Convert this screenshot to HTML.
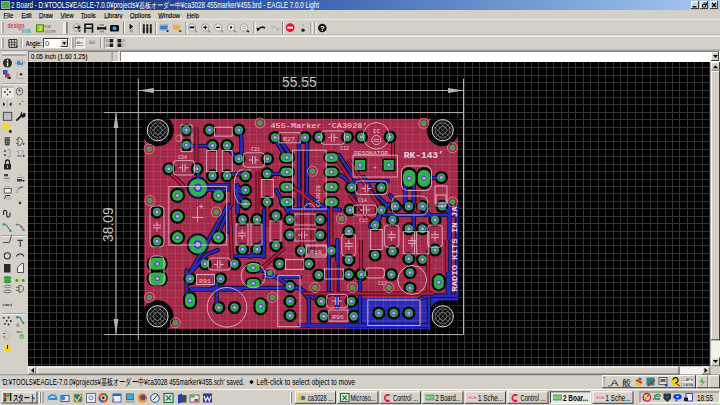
<!DOCTYPE html>
<html><head><meta charset="utf-8"><style>
html,body{margin:0;padding:0;width:720px;height:405px;overflow:hidden;background:#d4d0c8}
svg{display:block}
</style></head><body>
<svg width="720" height="405" viewBox="0 0 720 405" shape-rendering="auto">
<rect x="0" y="0" width="720" height="405" fill="#d4d0c8" />
<defs><linearGradient id="tg" x1="0" x2="1" y1="0" y2="0"><stop offset="0" stop-color="#0a246a"/><stop offset="0.42" stop-color="#3862b0"/><stop offset="1" stop-color="#a6caf0"/></linearGradient></defs>
<rect x="0" y="0" width="720" height="10" fill="url(#tg)" />
<rect x="1" y="1" width="9" height="8" fill="#9aa89a" />
<rect x="2" y="2" width="7" height="6" fill="#3fa84a" />
<text x="11" y="8.4" font-family="Liberation Sans" font-size="8.4" fill="#fff" textLength="308" lengthAdjust="spacingAndGlyphs">2 Board - D:¥TOOLS¥EAGLE-7.0.0¥projects¥基板オーダー中¥ca3028 455marker¥455.brd - EAGLE 7.0.0 Light</text>
<rect x="691" y="1" width="8" height="8" fill="#d4d0c8" />
<line x1="691" y1="1.5" x2="699" y2="1.5" stroke="#fff" stroke-width="1" />
<line x1="691.5" y1="1" x2="691.5" y2="9" stroke="#fff" stroke-width="1" />
<line x1="691" y1="8.5" x2="699" y2="8.5" stroke="#404040" stroke-width="1" />
<line x1="698.5" y1="1" x2="698.5" y2="9" stroke="#404040" stroke-width="1" />
<rect x="700" y="1" width="8" height="8" fill="#d4d0c8" />
<line x1="700" y1="1.5" x2="708" y2="1.5" stroke="#fff" stroke-width="1" />
<line x1="700.5" y1="1" x2="700.5" y2="9" stroke="#fff" stroke-width="1" />
<line x1="700" y1="8.5" x2="708" y2="8.5" stroke="#404040" stroke-width="1" />
<line x1="707.5" y1="1" x2="707.5" y2="9" stroke="#404040" stroke-width="1" />
<rect x="710" y="1" width="8" height="8" fill="#d4d0c8" />
<line x1="710" y1="1.5" x2="718" y2="1.5" stroke="#fff" stroke-width="1" />
<line x1="710.5" y1="1" x2="710.5" y2="9" stroke="#fff" stroke-width="1" />
<line x1="710" y1="8.5" x2="718" y2="8.5" stroke="#404040" stroke-width="1" />
<line x1="717.5" y1="1" x2="717.5" y2="9" stroke="#404040" stroke-width="1" />
<path d="M692.5 6.8h4" stroke="#000" stroke-width="1.3"/>
<path d="M702.5 4.5h3v2.5h-3z M703.5 3h3v2.5" stroke="#000" stroke-width="0.9" fill="none"/>
<path d="M712 3l4 4M716 3l-4 4" stroke="#000" stroke-width="1.2"/>
<rect x="0" y="10" width="720" height="9" fill="#d4d0c8" />
<text x="3.5" y="17.6" font-family="Liberation Sans" font-size="8" fill="#000" font-weight="normal" text-anchor="start" textLength="10.0" lengthAdjust="spacingAndGlyphs" stroke="#000" stroke-width="0.15">File</text>
<line x1="3.5" y1="18.3" x2="7.7" y2="18.3" stroke="#303030" stroke-width="0.7" />
<text x="21.5" y="17.6" font-family="Liberation Sans" font-size="8" fill="#000" font-weight="normal" text-anchor="start" textLength="10.2" lengthAdjust="spacingAndGlyphs" stroke="#000" stroke-width="0.15">Edit</text>
<line x1="21.5" y1="18.3" x2="25.7" y2="18.3" stroke="#303030" stroke-width="0.7" />
<text x="38.9" y="17.6" font-family="Liberation Sans" font-size="8" fill="#000" font-weight="normal" text-anchor="start" textLength="13.9" lengthAdjust="spacingAndGlyphs" stroke="#000" stroke-width="0.15">Draw</text>
<line x1="38.9" y1="18.3" x2="43.1" y2="18.3" stroke="#303030" stroke-width="0.7" />
<text x="60.4" y="17.6" font-family="Liberation Sans" font-size="8" fill="#000" font-weight="normal" text-anchor="start" textLength="13.2" lengthAdjust="spacingAndGlyphs" stroke="#000" stroke-width="0.15">View</text>
<line x1="60.4" y1="18.3" x2="64.6" y2="18.3" stroke="#303030" stroke-width="0.7" />
<text x="80.8" y="17.6" font-family="Liberation Sans" font-size="8" fill="#000" font-weight="normal" text-anchor="start" textLength="15.0" lengthAdjust="spacingAndGlyphs" stroke="#000" stroke-width="0.15">Tools</text>
<line x1="80.8" y1="18.3" x2="85.0" y2="18.3" stroke="#303030" stroke-width="0.7" />
<text x="104.2" y="17.6" font-family="Liberation Sans" font-size="8" fill="#000" font-weight="normal" text-anchor="start" textLength="18.3" lengthAdjust="spacingAndGlyphs" stroke="#000" stroke-width="0.15">Library</text>
<line x1="104.2" y1="18.3" x2="108.4" y2="18.3" stroke="#303030" stroke-width="0.7" />
<text x="130" y="17.6" font-family="Liberation Sans" font-size="8" fill="#000" font-weight="normal" text-anchor="start" textLength="20.8" lengthAdjust="spacingAndGlyphs" stroke="#000" stroke-width="0.15">Options</text>
<line x1="130" y1="18.3" x2="134.2" y2="18.3" stroke="#303030" stroke-width="0.7" />
<text x="158.3" y="17.6" font-family="Liberation Sans" font-size="8" fill="#000" font-weight="normal" text-anchor="start" textLength="21.7" lengthAdjust="spacingAndGlyphs" stroke="#000" stroke-width="0.15">Window</text>
<line x1="158.3" y1="18.3" x2="162.5" y2="18.3" stroke="#303030" stroke-width="0.7" />
<text x="186.7" y="17.6" font-family="Liberation Sans" font-size="8" fill="#000" font-weight="normal" text-anchor="start" textLength="12.3" lengthAdjust="spacingAndGlyphs" stroke="#000" stroke-width="0.15">Help</text>
<line x1="186.7" y1="18.3" x2="190.89999999999998" y2="18.3" stroke="#303030" stroke-width="0.7" />
<line x1="0" y1="19.3" x2="720" y2="19.3" stroke="#ecebe6" stroke-width="1" />
<line x1="0" y1="35.2" x2="720" y2="35.2" stroke="#808080" stroke-width="0.8" />
<line x1="0" y1="35.9" x2="720" y2="35.9" stroke="#fff" stroke-width="0.8" />
<line x1="1.5" y1="22" x2="1.5" y2="33" stroke="#fff" stroke-width="1" />
<line x1="3.0" y1="22" x2="3.0" y2="33" stroke="#808080" stroke-width="1" />
<line x1="65" y1="22" x2="65" y2="33" stroke="#fff" stroke-width="1" />
<line x1="66.5" y1="22" x2="66.5" y2="33" stroke="#808080" stroke-width="1" />
<line x1="0" y1="50.2" x2="720" y2="50.2" stroke="#808080" stroke-width="0.8" />
<line x1="1.5" y1="38" x2="1.5" y2="48" stroke="#fff" stroke-width="1" />
<line x1="3.0" y1="38" x2="3.0" y2="48" stroke="#808080" stroke-width="1" />
<text x="7.5" y="28.2" font-family="Liberation Sans" font-size="7" fill="#d83a5a" font-weight="bold" text-anchor="start" textLength="17" lengthAdjust="spacingAndGlyphs" >design</text>
<text x="21.3" y="32.6" font-family="Liberation Sans" font-size="6.8" fill="#40b0c8" font-weight="bold" text-anchor="start" textLength="9.6" lengthAdjust="spacingAndGlyphs" >link</text>
<rect x="36" y="24.3" width="8" height="8" fill="#3a8a20" />
<rect x="37" y="25.3" width="6" height="6" fill="#9ad020" />
<path d="M39.5 26l1 2.5-1 2.5M41 26v5" stroke="#e8f040" stroke-width="0.9" fill="none"/>
<text x="44.5" y="28.2" font-family="Liberation Sans" font-size="3.6" fill="#404040" font-weight="normal" text-anchor="start" textLength="6" lengthAdjust="spacingAndGlyphs" >PCB</text>
<text x="44.5" y="32.5" font-family="Liberation Sans" font-size="3.6" fill="#404040" font-weight="normal" text-anchor="start" textLength="11" lengthAdjust="spacingAndGlyphs" >QUOTE</text>
<line x1="63.8" y1="22" x2="63.8" y2="34" stroke="#fff" stroke-width="1" />
<line x1="67.3" y1="22" x2="67.3" y2="34" stroke="#808080" stroke-width="1" />
<circle cx="77" cy="27.5" r="3.8" fill="none" stroke="#b0b0b0" stroke-width="1.3"/>
<path d="M74.5 27.5h5M78 25.6l1.8 1.9-1.8 1.9" stroke="#000" stroke-width="1.2" fill="none"/>
<path d="M78 30.5h3l-1.5 1.6z" fill="#000"/>
<path d="M85 32.8V24.2h7.5v8.6 M85 28.3h7.5" stroke="#101010" stroke-width="1.6" fill="none"/>
<rect x="87.3" y="29.5" width="3" height="3.3" fill="#b8b8b8" />
<rect x="99.5" y="24" width="4.5" height="2" fill="#909090" />
<rect x="99.5" y="30.5" width="4.5" height="2" fill="#909090" />
<path d="M97.5 28.3h8.5" stroke="#101010" stroke-width="2.2"/>
<line x1="97.8" y1="26.5" x2="97.8" y2="30" stroke="#101010" stroke-width="1.2" />
<line x1="105.6" y1="26.5" x2="105.6" y2="30" stroke="#101010" stroke-width="1.2" />
<rect x="110" y="25" width="9" height="6.5" rx="1.2" fill="#101010"/>
<circle cx="114.5" cy="28.2" r="2" fill="#30a8e8"/>
<line x1="123.5" y1="22" x2="123.5" y2="34" stroke="#808080" stroke-width="1" />
<line x1="124.5" y1="22" x2="124.5" y2="34" stroke="#fff" stroke-width="1" />
<path d="M130 24.5l2.5 2.2-2.5 2.2z" fill="#181818" stroke="#181818" stroke-width="1"/>
<rect x="129.5" y="29.5" width="3.5" height="3" fill="#a0a0a0" />
<line x1="139.3" y1="22" x2="139.3" y2="34" stroke="#808080" stroke-width="1" />
<line x1="140.3" y1="22" x2="140.3" y2="34" stroke="#fff" stroke-width="1" />
<path d="M143.8 32.5V25" stroke="#181818" stroke-width="2" stroke-linecap="round"/>
<line x1="143.8" y1="26.5" x2="143.8" y2="27.5" stroke="#909090" stroke-width="1" />
<path d="M147.3 32.5V25" stroke="#181818" stroke-width="2" stroke-linecap="round"/>
<line x1="147.3" y1="26.5" x2="147.3" y2="27.5" stroke="#909090" stroke-width="1" />
<path d="M150.8 32.5V25" stroke="#181818" stroke-width="2" stroke-linecap="round"/>
<line x1="150.8" y1="26.5" x2="150.8" y2="27.5" stroke="#909090" stroke-width="1" />
<line x1="155.8" y1="22" x2="155.8" y2="34" stroke="#808080" stroke-width="1" />
<line x1="156.8" y1="22" x2="156.8" y2="34" stroke="#fff" stroke-width="1" />
<rect x="159.5" y="24.5" width="8.5" height="6" fill="#7aa8d8" />
<rect x="160.5" y="26" width="6.5" height="3" fill="#3c78c0" />
<path d="M166 30.5h3.2l-1.6 1.8z" fill="#000"/>
<rect x="172.2" y="24.5" width="8" height="6" fill="#d8c0a0" />
<rect x="173.2" y="25.8" width="6" height="3.5" fill="#e8a840" />
<path d="M178.6 30.5h3.2l-1.6 1.8z" fill="#000"/>
<line x1="186" y1="22" x2="186" y2="34" stroke="#808080" stroke-width="1" />
<line x1="187" y1="22" x2="187" y2="34" stroke="#fff" stroke-width="1" />
<path d="M194.3 29.7l2.6 2.6" stroke="#909090" stroke-width="1.6"/>
<circle cx="192" cy="27.4" r="3.6" fill="#f4f4f4" stroke="#a8a8a8" stroke-width="1.2"/>
<rect x="189.7" y="26.4" width="4.6" height="2" fill="#101010" />
<path d="M207.60000000000002 29.7l2.6 2.6" stroke="#909090" stroke-width="1.6"/>
<circle cx="205.3" cy="27.4" r="3.6" fill="#f4f4f4" stroke="#a8a8a8" stroke-width="1.2"/>
<path d="M203.3 27.4h4M205.3 25.4v4" stroke="#101010" stroke-width="1.2"/>
<path d="M220.5 29.7l2.6 2.6" stroke="#909090" stroke-width="1.6"/>
<circle cx="218.2" cy="27.4" r="3.6" fill="#f4f4f4" stroke="#a8a8a8" stroke-width="1.2"/>
<path d="M216.2 27.4h4" stroke="#101010" stroke-width="1.2"/>
<path d="M233.4 29.7l2.6 2.6" stroke="#909090" stroke-width="1.6"/>
<circle cx="231.1" cy="27.4" r="3.6" fill="#f4f4f4" stroke="#a8a8a8" stroke-width="1.2"/>
<circle cx="231.1" cy="27.4" r="1.2" fill="#101010"/>
<path d="M246.3 29.7l2.6 2.6" stroke="#909090" stroke-width="1.6"/>
<circle cx="244" cy="27.4" r="3.6" fill="#f4f4f4" stroke="#a8a8a8" stroke-width="1.2"/>
<path d="M242 26.4h4M242 28.4h4" stroke="#a0a0a0" stroke-width="1"/>
<path d="M246.5 30.8h3l-1.5 1.6z" fill="#000"/>
<line x1="254" y1="22" x2="254" y2="34" stroke="#808080" stroke-width="1" />
<line x1="255" y1="22" x2="255" y2="34" stroke="#fff" stroke-width="1" />
<path d="M258 30.5c1-3 4-4.5 7-2.5" stroke="#181818" stroke-width="1.6" fill="none"/>
<path d="M256.3 27.8l3.5 0.4-2.2 3.2z" fill="#181818"/>
<path d="M278 30.5c-1-3-4-4.5-7-2.5" stroke="#b8b8b8" stroke-width="1.6" fill="none"/>
<path d="M279.7 27.8l-3.5 0.4 2.2 3.2z" fill="#b8b8b8"/>
<line x1="282.5" y1="22" x2="282.5" y2="34" stroke="#808080" stroke-width="1" />
<line x1="283.5" y1="22" x2="283.5" y2="34" stroke="#fff" stroke-width="1" />
<circle cx="290.2" cy="27.6" r="4.4" fill="#e01838"/>
<rect x="287.4" y="26.7" width="5.6" height="1.9" fill="#fff" />
<circle cx="303" cy="25" r="1.4" fill="#b8b8b8"/><circle cx="303" cy="30.3" r="1.8" fill="#303030"/>
<line x1="311" y1="22" x2="311" y2="34" stroke="#808080" stroke-width="1" />
<line x1="312" y1="22" x2="312" y2="34" stroke="#fff" stroke-width="1" />
<line x1="315" y1="22" x2="315" y2="34" stroke="#808080" stroke-width="1" />
<line x1="316" y1="22" x2="316" y2="34" stroke="#fff" stroke-width="1" />
<circle cx="322.3" cy="28" r="4.3" fill="#181818"/>
<text x="322.3" y="31.2" font-family="Liberation Sans" font-size="7" fill="#fff" font-weight="bold" text-anchor="middle" >?</text>
<line x1="0" y1="36" x2="720" y2="36" stroke="#fff" stroke-width="0.8" />
<rect x="8.4" y="38.9" width="9" height="9" rx="1.3" fill="#303030"/>
<rect x="9.5" y="40.0" width="1.9" height="1.9" fill="#d0d0d0" />
<rect x="9.5" y="42.6" width="1.9" height="1.9" fill="#d0d0d0" />
<rect x="9.5" y="45.2" width="1.9" height="1.9" fill="#d0d0d0" />
<rect x="12.1" y="40.0" width="1.9" height="1.9" fill="#d0d0d0" />
<rect x="12.1" y="42.6" width="1.9" height="1.9" fill="#d0d0d0" />
<rect x="12.1" y="45.2" width="1.9" height="1.9" fill="#d0d0d0" />
<rect x="14.7" y="40.0" width="1.9" height="1.9" fill="#d0d0d0" />
<rect x="14.7" y="42.6" width="1.9" height="1.9" fill="#d0d0d0" />
<rect x="14.7" y="45.2" width="1.9" height="1.9" fill="#d0d0d0" />
<path d="M15.6 46.2h2.6l-1.3 1.6z" fill="#000"/>
<line x1="21.3" y1="38" x2="21.3" y2="48" stroke="#808080" stroke-width="1" />
<line x1="22.3" y1="38" x2="22.3" y2="48" stroke="#fff" stroke-width="1" />
<text x="25.8" y="46.3" font-family="Liberation Sans" font-size="7.8" fill="#000" font-weight="normal" text-anchor="start" textLength="15.8" lengthAdjust="spacingAndGlyphs" stroke="#000" stroke-width="0.12">Angle:</text>
<rect x="43" y="38" width="26" height="10" fill="#fff" />
<line x1="43" y1="38.5" x2="69" y2="38.5" stroke="#808080" stroke-width="1" />
<line x1="43.5" y1="38" x2="43.5" y2="48" stroke="#808080" stroke-width="1" />
<line x1="43" y1="47.5" x2="69" y2="47.5" stroke="#fff" stroke-width="1" />
<line x1="68.5" y1="38" x2="68.5" y2="48" stroke="#fff" stroke-width="1" />
<line x1="43.5" y1="38.5" x2="68.5" y2="38.5" stroke="#404040" stroke-width="1" />
<line x1="43.5" y1="38.5" x2="43.5" y2="47.5" stroke="#404040" stroke-width="1" />
<text x="45" y="46.4" font-family="Liberation Sans" font-size="8" fill="#404040" font-weight="normal" text-anchor="start" >0</text>
<rect x="60.5" y="39" width="7.5" height="8" fill="#d4d0c8" />
<line x1="60.5" y1="39.5" x2="68.0" y2="39.5" stroke="#fff" stroke-width="1" />
<line x1="61.0" y1="39" x2="61.0" y2="47" stroke="#fff" stroke-width="1" />
<line x1="60.5" y1="46.5" x2="68.0" y2="46.5" stroke="#404040" stroke-width="1" />
<line x1="67.5" y1="39" x2="67.5" y2="47" stroke="#404040" stroke-width="1" />
<path d="M62.2 42.3h4.2l-2.1 2.4z" fill="#000"/>
<line x1="71.5" y1="37.5" x2="71.5" y2="48.5" stroke="#fff" stroke-width="1" />
<line x1="73" y1="37.5" x2="73" y2="48.5" stroke="#808080" stroke-width="1" />
<rect x="75" y="37.3" width="10" height="11" fill="#ebe9e4" />
<line x1="75" y1="37.8" x2="85" y2="37.8" stroke="#808080" stroke-width="0.8" />
<line x1="75.4" y1="37.3" x2="75.4" y2="48.3" stroke="#808080" stroke-width="0.8" />
<line x1="75" y1="48" x2="85" y2="48" stroke="#fff" stroke-width="0.8" />
<line x1="84.6" y1="37.3" x2="84.6" y2="48.3" stroke="#fff" stroke-width="0.8" />
<text x="76.6" y="44" font-family="Liberation Sans" font-size="3.5" fill="#505050" font-weight="normal" text-anchor="start" textLength="6.5" lengthAdjust="spacingAndGlyphs" >Abc</text>
<line x1="76.5" y1="45.5" x2="83.5" y2="45.5" stroke="#909090" stroke-width="0.8" />
<text x="89" y="44.3" font-family="Liberation Sans" font-size="3.5" fill="#707070" font-weight="normal" text-anchor="start" textLength="7" lengthAdjust="spacingAndGlyphs" transform="translate(0,0)">Abc</text>
<line x1="89" y1="41" x2="96" y2="41" stroke="#a0a0a0" stroke-width="0.7" />
<line x1="100.8" y1="38" x2="100.8" y2="48" stroke="#808080" stroke-width="1" />
<line x1="101.8" y1="38" x2="101.8" y2="48" stroke="#fff" stroke-width="1" />
<rect x="104" y="37.3" width="11" height="11" fill="#ebe9e4" />
<line x1="104" y1="37.8" x2="115" y2="37.8" stroke="#808080" stroke-width="0.8" />
<line x1="104.4" y1="37.3" x2="104.4" y2="48.3" stroke="#808080" stroke-width="0.8" />
<rect x="105.5" y="39" width="3.3" height="3.5" fill="#a8a8a8" />
<rect x="109.5" y="39" width="3.8" height="3.5" fill="#202020" />
<rect x="105.5" y="43.5" width="3.3" height="3.5" fill="#a8a8a8" />
<rect x="109.5" y="43.5" width="3.8" height="3.5" fill="#202020" />
<rect x="117.5" y="39" width="3.8" height="3.5" fill="#202020" />
<rect x="122" y="39" width="3.3" height="3.5" fill="#b8b8b8" />
<rect x="117.5" y="43.5" width="3.8" height="3.5" fill="#202020" />
<rect x="122" y="43.5" width="3.3" height="3.5" fill="#b8b8b8" />
<line x1="2" y1="53" x2="26" y2="53" stroke="#fff" stroke-width="1" />
<line x1="2" y1="55" x2="26" y2="55" stroke="#808080" stroke-width="1" />
<circle cx="7.5" cy="63" r="4.5" fill="#282828"/>
<circle cx="7.5" cy="60.5" r="0.9" fill="#e8e8e8"/><path d="M7.5 62.3v4" stroke="#e8e8e8" stroke-width="1.5"/>
<ellipse cx="20" cy="63" rx="4.6" ry="3.1" fill="#f0f0f0" stroke="#c89890" stroke-width="0.8"/>
<ellipse cx="20" cy="63" rx="3.6" ry="2.2" fill="#2890d8"/>
<circle cx="21" cy="62" r="0.9" fill="#e0f0ff"/>
<rect x="3" y="70" width="4.5" height="4.5" fill="#2058c8" />
<rect x="5" y="73.5" width="4.5" height="4" fill="#d82058" />
<rect x="7" y="76" width="3.5" height="2.8" fill="#28a048" />
<rect x="8.5" y="77" width="2" height="2" fill="#000" />
<path d="M17 71v7.5h7.5" stroke="#a8a8a8" stroke-width="0.8" fill="none"/>
<circle cx="21" cy="74.3" r="1.3" fill="#303030"/>
<line x1="2" y1="83.5" x2="26" y2="83.5" stroke="#808080" stroke-width="0.8" />
<line x1="2" y1="84.3" x2="26" y2="84.3" stroke="#fff" stroke-width="0.8" />
<rect x="1" y="86.5" width="12.5" height="11" fill="#ebe9e4" />
<line x1="1" y1="87" x2="13.5" y2="87" stroke="#808080" stroke-width="0.8" />
<line x1="1.4" y1="86.5" x2="1.4" y2="97.5" stroke="#808080" stroke-width="0.8" />
<circle cx="7.5" cy="89.4" r="0.9" fill="#303030"/>
<circle cx="7.5" cy="94.6" r="0.9" fill="#303030"/>
<circle cx="4.9" cy="92" r="0.9" fill="#303030"/>
<circle cx="10.1" cy="92" r="0.9" fill="#303030"/>
<ellipse cx="19.5" cy="91.5" rx="3.3" ry="3.8" fill="#c8c8c8" stroke="#707070" stroke-width="1"/>
<circle cx="19.5" cy="90.5" r="1" fill="#404040"/>
<path d="M3 102.5a1.8 1.8 0 0 1 0 3.6z" fill="#202020"/><path d="M11.5 102.5a1.8 1.8 0 0 0 0 3.6z" fill="#202020"/>
<line x1="7.3" y1="100" x2="7.3" y2="108" stroke="#a8a8a8" stroke-width="0.8" />
<circle cx="20" cy="104" r="0.8" fill="#303030"/><circle cx="22.6" cy="101.4" r="0.7" fill="#606060"/>
<rect x="3.3" y="112.3" width="8.5" height="8" fill="#c0c0c0" stroke="#404040" stroke-width="0.9"/>
<path d="M17 120l4-4" stroke="#202020" stroke-width="1.8" stroke-linecap="round"/>
<path d="M20.5 114.5a2.6 2.6 0 1 0 3.5-1.8l-1.5 1.6-1-1 1.5-1.5a2.6 2.6 0 0 0 -2.5 2.7z" fill="#202020"/>
<circle cx="5.8" cy="126.5" r="3.4" fill="#f8d810"/><circle cx="10.3" cy="131.5" r="1.4" fill="#101010"/>
<path d="M4.5 137.5h5.5M5 138.8h4.5l-0.4 6.2h-3.7z" fill="#404040" stroke="#404040" stroke-width="0.8"/>
<line x1="6.5" y1="139.5" x2="6.5" y2="144" stroke="#a0a0a0" stroke-width="0.6" />
<line x1="8" y1="139.5" x2="8" y2="144" stroke="#a0a0a0" stroke-width="0.6" />
<path d="M18 137.5c3 0 4.5 2 4.5 4s-1.5 4-4.5 4z" fill="none" stroke="#505050" stroke-width="0.9"/>
<line x1="16" y1="139.5" x2="18" y2="139.5" stroke="#505050" stroke-width="0.8" />
<line x1="16" y1="143.5" x2="18" y2="143.5" stroke="#505050" stroke-width="0.8" />
<path d="M22.5 143.5h2.5l-1.25 1.5z" fill="#000"/>
<path d="M3.5 151.5l1.5-1.8 1.5 1.8zM3.5 154.5l1.5 1.8 1.5-1.8z" fill="#202020"/>
<path d="M7.5 149.5h2.5v7.5h-2.5" stroke="#909090" stroke-width="0.9" fill="none"/>
<path d="M16.5 151.5h2M18.5 150v5.5M20.5 150.5h2.5v5" stroke="#a8a8a8" stroke-width="1.1" fill="none"/>
<path d="M17 156h5" stroke="#505050" stroke-width="0.8"/><path d="M22.5 155.5h2.5l-1.25 1.5z" fill="#000"/>
<path d="M5.5 164v-2a2 2 0 0 1 4 0v2" stroke="#202020" stroke-width="1.3" fill="none"/>
<rect x="4" y="164" width="7" height="5.6" rx="0.8" fill="#202020"/>
<path d="M7.5 165.5v2.5" stroke="#c0c0c0" stroke-width="1"/>
<rect x="4" y="174" width="4" height="2.3" fill="#404040" />
<line x1="4" y1="178.3" x2="10" y2="178.3" stroke="#606060" stroke-width="0.8" />
<rect x="4.5" y="180" width="5.5" height="1.5" fill="#c0c0c0" />
<rect x="17.5" y="174" width="4" height="1.6" fill="#c0c0c0" />
<line x1="17" y1="177.5" x2="23.5" y2="177.5" stroke="#808080" stroke-width="0.8" />
<rect x="17" y="179" width="5" height="2.5" fill="#404040" />
<path d="M22 180h3l-1.5 1.8z" fill="#000"/>
<path d="M4 186.5h5v2" stroke="#b0b0b0" stroke-width="1" fill="none"/>
<rect x="4.2" y="188.5" width="7" height="4.5" fill="#f0f0f0" stroke="#505050" stroke-width="0.9"/>
<path d="M17 192.5a5.5 5.5 0 0 1 6-5.5" stroke="#303030" stroke-width="1" fill="none"/>
<path d="M16.5 186.5h2v6h-2z" fill="#b8b8b8"/>
<path d="M4.5 199l1.5-3.5h4" stroke="#303030" stroke-width="1" fill="none"/>
<rect x="6.5" y="196.5" width="5" height="3.5" fill="#b8b8b8" />
<path d="M17.5 201h5" stroke="#b0b0b0" stroke-width="0.8"/><path d="M20 201.5l1.5 1.5-1.5 1.5-1.5-1.5z" fill="#202020"/>
<path d="M3.5 215v-3a1.6 1.6 0 0 1 3.2 0v3.5a1.6 1.6 0 0 0 3.2 0v-3" stroke="#303030" stroke-width="1.2" fill="none"/>
<path d="M3.5 224.3l3 0.8 2.5 4 2 1.8" stroke="#3060c0" stroke-width="1" fill="none"/>
<circle cx="3.8" cy="224.3" r="1.2" fill="#30a040"/><circle cx="10.5" cy="230.7" r="1.3" fill="#30a040"/>
<path d="M16.5 224.5l3.5 0.5 2 2.3 2.5 2.7" stroke="#3060c0" stroke-width="0.9" fill="none"/>
<circle cx="21.3" cy="226.8" r="1.1" fill="#e02060"/><circle cx="16.5" cy="224.5" r="0.9" fill="#30a040"/><path d="M22 229l2.5 2" stroke="#30a040" stroke-width="1.3"/>
<line x1="2" y1="235.5" x2="26" y2="235.5" stroke="#808080" stroke-width="0.8" />
<line x1="2" y1="236.3" x2="26" y2="236.3" stroke="#fff" stroke-width="0.8" />
<path d="M3 242.5h6.5M9.5 242l2-6.5" stroke="#404040" stroke-width="0.9" fill="none"/>
<path d="M17.5 240.3h5.5M20.3 240.3v6.5" stroke="#404040" stroke-width="1.2" fill="none"/>
<circle cx="7.3" cy="255.8" r="3.1" fill="none" stroke="#303030" stroke-width="1.1"/>
<path d="M16.5 256.5a4 4 0 0 1 7.5 0" stroke="#303030" stroke-width="1.1" fill="none"/>
<rect x="4" y="264" width="6.5" height="8.5" fill="#282828" />
<path d="M17.5 272.5v-5l4-4h2v9z" fill="#f4f4f4" stroke="#404040" stroke-width="0.9"/>
<ellipse cx="7.5" cy="277.7" rx="3.8" ry="1.8" fill="#30a040"/><ellipse cx="7.5" cy="281.5" rx="3.8" ry="1.8" fill="#30a040"/>
<line x1="4" y1="279.5" x2="11" y2="279.5" stroke="#808080" stroke-width="0.8" />
<path d="M16.5 280.5h7" stroke="#d8d820" stroke-width="1.3"/><circle cx="16.8" cy="280.5" r="1.4" fill="#30a040"/><circle cx="23.3" cy="280.5" r="1.4" fill="#30a040"/>
<ellipse cx="7.5" cy="291.5" rx="3.5" ry="1.4" fill="none" stroke="#606060" stroke-width="0.9"/>
<ellipse cx="7.5" cy="286.5" rx="3.5" ry="1.2" fill="none" stroke="#707070" stroke-width="0.8"/>
<path d="M16 287.3h3M16 290.3h3M19 285.3c3 0 4.6 1.6 4.6 3.5s-1.6 3.5-4.6 3.5z" stroke="#505050" stroke-width="0.9" fill="none"/>
<path d="M3.5 305h7.5" stroke="#404040" stroke-width="0.7"/><path d="M5.5 305l1.5-1 0 2z M9 305l-1.5-1 0 2z" fill="#404040"/>
<line x1="3" y1="303.5" x2="3" y2="306.5" stroke="#404040" stroke-width="0.6" />
<line x1="11.5" y1="303.5" x2="11.5" y2="306.5" stroke="#404040" stroke-width="0.6" />
<line x1="2" y1="313.5" x2="26" y2="313.5" stroke="#808080" stroke-width="0.8" />
<line x1="2" y1="314.3" x2="26" y2="314.3" stroke="#fff" stroke-width="0.8" />
<circle cx="3.7" cy="317.8" r="0.9" fill="#202020"/>
<circle cx="8.6" cy="317.5" r="0.9" fill="#202020"/>
<circle cx="6.8" cy="320.8" r="0.9" fill="#202020"/>
<circle cx="10.8" cy="321" r="0.9" fill="#202020"/>
<circle cx="5" cy="323.8" r="0.9" fill="#202020"/>
<circle cx="8.6" cy="324.5" r="0.9" fill="#202020"/>
<circle cx="17.3" cy="317.3" r="1.3" fill="#30a040"/><path d="M17.5 317l2.5 0.5 1.5 3 2 2.5" stroke="#3060c0" stroke-width="1.1" fill="none"/><circle cx="23.3" cy="323" r="1.2" fill="#30a040"/>
<text x="16.2" y="326.5" font-family="Liberation Sans" font-size="4.5" fill="#404040" font-weight="normal" text-anchor="start" >A</text>
<path d="M4 330.5l4 2 2.5 3-2.5 3-4 2" stroke="#a8a8a8" stroke-width="0.7" fill="none"/>
<line x1="3" y1="333.5" x2="5.5" y2="333.5" stroke="#404040" stroke-width="0.7" />
<line x1="3" y1="337" x2="5.5" y2="337" stroke="#404040" stroke-width="0.7" />
<path d="M16.5 332h6" stroke="#707070" stroke-width="0.9"/><circle cx="18" cy="332" r="0.8" fill="#505050"/>
<circle cx="21.8" cy="336.5" r="2.4" fill="#60c040"/><path d="M20.7 336.6l0.9 0.9 1.7-1.7" stroke="#fff" stroke-width="0.7" fill="none"/>
<path d="M7.5 342.5l4 8.5h-8z" fill="#f8d020"/><path d="M7.5 345v4" stroke="#202020" stroke-width="1"/>
<rect x="28" y="51" width="84" height="11" fill="#d4d0c8" />
<line x1="28" y1="51.5" x2="112" y2="51.5" stroke="#808080" stroke-width="1" />
<line x1="28.5" y1="51" x2="28.5" y2="62" stroke="#808080" stroke-width="1" />
<line x1="28" y1="61.5" x2="112" y2="61.5" stroke="#fff" stroke-width="1" />
<line x1="111.5" y1="51" x2="111.5" y2="62" stroke="#fff" stroke-width="1" />
<line x1="28" y1="61.5" x2="112" y2="61.5" stroke="#d4d0c8" stroke-width="1" />
<text x="31" y="59.3" font-family="Liberation Sans" font-size="7.8" fill="#000" font-weight="normal" text-anchor="start" textLength="56.5" lengthAdjust="spacingAndGlyphs" stroke="#000" stroke-width="0.12">0.05 inch (1.60 1.25)</text>
<rect x="111.5" y="51" width="8" height="11" fill="#d4d0c8" />
<line x1="111.5" y1="51.5" x2="119.5" y2="51.5" stroke="#808080" stroke-width="1" />
<line x1="112.0" y1="51" x2="112.0" y2="62" stroke="#808080" stroke-width="1" />
<line x1="111.5" y1="61.5" x2="119.5" y2="61.5" stroke="#fff" stroke-width="1" />
<line x1="119.0" y1="51" x2="119.0" y2="62" stroke="#fff" stroke-width="1" />
<rect x="120" y="51" width="600" height="11" fill="#fff" />
<line x1="120" y1="51.5" x2="720" y2="51.5" stroke="#808080" stroke-width="1" />
<line x1="120.5" y1="51" x2="120.5" y2="62" stroke="#808080" stroke-width="1" />
<line x1="120" y1="61.5" x2="720" y2="61.5" stroke="#fff" stroke-width="1" />
<line x1="719.5" y1="51" x2="719.5" y2="62" stroke="#fff" stroke-width="1" />
<rect x="711" y="52" width="8" height="9" fill="#d4d0c8" />
<line x1="711" y1="52.5" x2="719" y2="52.5" stroke="#fff" stroke-width="1" />
<line x1="711.5" y1="52" x2="711.5" y2="61" stroke="#fff" stroke-width="1" />
<line x1="711" y1="60.5" x2="719" y2="60.5" stroke="#404040" stroke-width="1" />
<line x1="718.5" y1="52" x2="718.5" y2="61" stroke="#404040" stroke-width="1" />
<path d="M713 55h5l-2.5 3z" fill="#000"/>
<rect x="28" y="62" width="682.5" height="304.3" fill="#000" />
<clipPath id="cv"><rect x="28" y="62" width="682.5" height="304.3"/></clipPath>
<g clip-path="url(#cv)">
<path d="M34.5 62V366.3M41.5 62V366.3M49.5 62V366.3M56.5 62V366.3M63.5 62V366.3M71.5 62V366.3M78.5 62V366.3M86.5 62V366.3M93.5 62V366.3M101.5 62V366.3M108.5 62V366.3M115.5 62V366.3M123.5 62V366.3M130.5 62V366.3M138.5 62V366.3M145.5 62V366.3M153.5 62V366.3M160.5 62V366.3M167.5 62V366.3M175.5 62V366.3M182.5 62V366.3M190.5 62V366.3M197.5 62V366.3M204.5 62V366.3M212.5 62V366.3M219.5 62V366.3M227.5 62V366.3M234.5 62V366.3M242.5 62V366.3M249.5 62V366.3M256.5 62V366.3M264.5 62V366.3M271.5 62V366.3M279.5 62V366.3M286.5 62V366.3M294.5 62V366.3M301.5 62V366.3M308.5 62V366.3M316.5 62V366.3M323.5 62V366.3M331.5 62V366.3M338.5 62V366.3M345.5 62V366.3M353.5 62V366.3M360.5 62V366.3M368.5 62V366.3M375.5 62V366.3M383.5 62V366.3M390.5 62V366.3M397.5 62V366.3M405.5 62V366.3M412.5 62V366.3M420.5 62V366.3M427.5 62V366.3M435.5 62V366.3M442.5 62V366.3M449.5 62V366.3M457.5 62V366.3M464.5 62V366.3M472.5 62V366.3M479.5 62V366.3M486.5 62V366.3M494.5 62V366.3M501.5 62V366.3M509.5 62V366.3M516.5 62V366.3M524.5 62V366.3M531.5 62V366.3M538.5 62V366.3M546.5 62V366.3M553.5 62V366.3M561.5 62V366.3M568.5 62V366.3M575.5 62V366.3M583.5 62V366.3M590.5 62V366.3M598.5 62V366.3M605.5 62V366.3M613.5 62V366.3M620.5 62V366.3M627.5 62V366.3M635.5 62V366.3M642.5 62V366.3M650.5 62V366.3M657.5 62V366.3M665.5 62V366.3M672.5 62V366.3M679.5 62V366.3M687.5 62V366.3M694.5 62V366.3M702.5 62V366.3M709.5 62V366.3M28 67.5H710.5M28 75.5H710.5M28 82.5H710.5M28 90.5H710.5M28 97.5H710.5M28 104.5H710.5M28 112.5H710.5M28 119.5H710.5M28 127.5H710.5M28 134.5H710.5M28 141.5H710.5M28 149.5H710.5M28 156.5H710.5M28 164.5H710.5M28 171.5H710.5M28 179.5H710.5M28 186.5H710.5M28 193.5H710.5M28 201.5H710.5M28 208.5H710.5M28 216.5H710.5M28 223.5H710.5M28 231.5H710.5M28 238.5H710.5M28 245.5H710.5M28 253.5H710.5M28 260.5H710.5M28 268.5H710.5M28 275.5H710.5M28 282.5H710.5M28 290.5H710.5M28 297.5H710.5M28 305.5H710.5M28 312.5H710.5M28 320.5H710.5M28 327.5H710.5M28 334.5H710.5M28 342.5H710.5M28 349.5H710.5M28 357.5H710.5M28 364.5H710.5" stroke="#333333" stroke-width="1" fill="none"/>
</g>
<g clip-path="url(#cv)">
<rect x="144.3" y="118.8" width="313.1" height="210.1" fill="#a42848"/>
<circle cx="157.9" cy="130.2" r="16" fill="#000"/>
<rect x="143.3" y="117.8" width="15.599999999999994" height="13.399999999999991" fill="#000"/>
<circle cx="442.7" cy="130.2" r="16" fill="#000"/>
<rect x="441.7" y="117.8" width="16.69999999999999" height="13.399999999999991" fill="#000"/>
<circle cx="157.5" cy="316.3" r="16" fill="#000"/>
<rect x="143.3" y="315.3" width="15.199999999999989" height="14.599999999999966" fill="#000"/>
<circle cx="442.8" cy="316.3" r="16" fill="#000"/>
<rect x="441.8" y="315.3" width="16.599999999999966" height="14.599999999999966" fill="#000"/>
<circle cx="157.9" cy="130.2" r="10.6" fill="#000" stroke="#dcdcdc" stroke-width="1"/>
<clipPath id="h15791302318"><circle cx="157.9" cy="130.2" r="10.1"/></clipPath>
<path d="M129.5 130.6L157.5 158.6M129.5 129.79999999999998L157.5 101.79999999999998M131.9 128.2L159.9 156.2M131.9 132.2L159.9 104.19999999999999M134.3 125.79999999999998L162.3 153.79999999999998M134.3 134.6L162.3 106.6M136.70000000000002 123.39999999999999L164.70000000000002 151.39999999999998M136.70000000000002 137.0L164.70000000000002 108.99999999999999M139.1 120.99999999999999L167.1 149.0M139.1 139.39999999999998L167.1 111.39999999999999M141.5 118.6L169.5 146.6M141.5 141.79999999999998L169.5 113.79999999999998M143.9 116.19999999999999L171.9 144.2M143.9 144.2L171.9 116.19999999999999M146.3 113.79999999999998L174.3 141.79999999999998M146.3 146.6L174.3 118.6M148.70000000000002 111.39999999999999L176.70000000000002 139.39999999999998M148.70000000000002 149.0L176.70000000000002 120.99999999999999M151.1 108.99999999999999L179.1 137.0M151.1 151.39999999999998L179.1 123.39999999999999M153.5 106.6L181.5 134.6M153.5 153.79999999999998L181.5 125.79999999999998M155.9 104.19999999999999L183.9 132.2M155.9 156.2L183.9 128.2M158.3 101.79999999999998L186.3 129.79999999999998M158.3 158.6L186.3 130.6" stroke="#a0a0a0" stroke-width="0.5" clip-path="url(#h15791302318)"/>
<circle cx="157.9" cy="130.2" r="4" fill="none" stroke="#909090" stroke-width="0.6"/>
<circle cx="157.9" cy="130.2" r="7.3" fill="none" stroke="#8a8a8a" stroke-width="0.5"/>
<circle cx="442.7" cy="130.2" r="10.6" fill="#000" stroke="#dcdcdc" stroke-width="1"/>
<clipPath id="h44271302323"><circle cx="442.7" cy="130.2" r="10.1"/></clipPath>
<path d="M414.3 130.6L442.3 158.6M414.3 129.79999999999998L442.3 101.79999999999998M416.7 128.2L444.7 156.2M416.7 132.2L444.7 104.19999999999999M419.09999999999997 125.79999999999998L447.09999999999997 153.79999999999998M419.09999999999997 134.6L447.09999999999997 106.6M421.5 123.39999999999999L449.5 151.39999999999998M421.5 137.0L449.5 108.99999999999999M423.9 120.99999999999999L451.9 149.0M423.9 139.39999999999998L451.9 111.39999999999999M426.3 118.6L454.3 146.6M426.3 141.79999999999998L454.3 113.79999999999998M428.7 116.19999999999999L456.7 144.2M428.7 144.2L456.7 116.19999999999999M431.09999999999997 113.79999999999998L459.09999999999997 141.79999999999998M431.09999999999997 146.6L459.09999999999997 118.6M433.5 111.39999999999999L461.5 139.39999999999998M433.5 149.0L461.5 120.99999999999999M435.9 108.99999999999999L463.9 137.0M435.9 151.39999999999998L463.9 123.39999999999999M438.3 106.6L466.3 134.6M438.3 153.79999999999998L466.3 125.79999999999998M440.7 104.19999999999999L468.7 132.2M440.7 156.2L468.7 128.2M443.09999999999997 101.79999999999998L471.09999999999997 129.79999999999998M443.09999999999997 158.6L471.09999999999997 130.6" stroke="#a0a0a0" stroke-width="0.5" clip-path="url(#h44271302323)"/>
<circle cx="442.7" cy="130.2" r="4" fill="none" stroke="#909090" stroke-width="0.6"/>
<circle cx="442.7" cy="130.2" r="7.3" fill="none" stroke="#8a8a8a" stroke-width="0.5"/>
<circle cx="157.5" cy="316.3" r="10.6" fill="#000" stroke="#dcdcdc" stroke-width="1"/>
<clipPath id="h15753163328"><circle cx="157.5" cy="316.3" r="10.1"/></clipPath>
<path d="M129.1 316.7L157.1 344.7M129.1 315.90000000000003L157.1 287.90000000000003M131.5 314.3L159.5 342.3M131.5 318.3L159.5 290.3M133.9 311.90000000000003L161.9 339.90000000000003M133.9 320.7L161.9 292.7M136.3 309.5L164.3 337.5M136.3 323.1L164.3 295.1M138.7 307.1L166.7 335.1M138.7 325.5L166.7 297.5M141.1 304.7L169.1 332.7M141.1 327.90000000000003L169.1 299.90000000000003M143.5 302.3L171.5 330.3M143.5 330.3L171.5 302.3M145.9 299.90000000000003L173.9 327.90000000000003M145.9 332.7L173.9 304.7M148.3 297.5L176.3 325.5M148.3 335.1L176.3 307.1M150.7 295.1L178.7 323.1M150.7 337.5L178.7 309.5M153.1 292.7L181.1 320.7M153.1 339.90000000000003L181.1 311.90000000000003M155.5 290.3L183.5 318.3M155.5 342.3L183.5 314.3M157.9 287.90000000000003L185.9 315.90000000000003M157.9 344.7L185.9 316.7" stroke="#a0a0a0" stroke-width="0.5" clip-path="url(#h15753163328)"/>
<circle cx="157.5" cy="316.3" r="4" fill="none" stroke="#909090" stroke-width="0.6"/>
<circle cx="157.5" cy="316.3" r="7.3" fill="none" stroke="#8a8a8a" stroke-width="0.5"/>
<circle cx="442.8" cy="316.3" r="10.6" fill="#000" stroke="#dcdcdc" stroke-width="1"/>
<clipPath id="h44283163333"><circle cx="442.8" cy="316.3" r="10.1"/></clipPath>
<path d="M414.40000000000003 316.7L442.40000000000003 344.7M414.40000000000003 315.90000000000003L442.40000000000003 287.90000000000003M416.8 314.3L444.8 342.3M416.8 318.3L444.8 290.3M419.2 311.90000000000003L447.2 339.90000000000003M419.2 320.7L447.2 292.7M421.6 309.5L449.6 337.5M421.6 323.1L449.6 295.1M424.0 307.1L452.0 335.1M424.0 325.5L452.0 297.5M426.40000000000003 304.7L454.40000000000003 332.7M426.40000000000003 327.90000000000003L454.40000000000003 299.90000000000003M428.8 302.3L456.8 330.3M428.8 330.3L456.8 302.3M431.2 299.90000000000003L459.2 327.90000000000003M431.2 332.7L459.2 304.7M433.6 297.5L461.6 325.5M433.6 335.1L461.6 307.1M436.0 295.1L464.0 323.1M436.0 337.5L464.0 309.5M438.40000000000003 292.7L466.40000000000003 320.7M438.40000000000003 339.90000000000003L466.40000000000003 311.90000000000003M440.8 290.3L468.8 318.3M440.8 342.3L468.8 314.3M443.2 287.90000000000003L471.2 315.90000000000003M443.2 344.7L471.2 316.7" stroke="#a0a0a0" stroke-width="0.5" clip-path="url(#h44283163333)"/>
<circle cx="442.8" cy="316.3" r="4" fill="none" stroke="#909090" stroke-width="0.6"/>
<circle cx="442.8" cy="316.3" r="7.3" fill="none" stroke="#8a8a8a" stroke-width="0.5"/>
<path d="M348 297H457.4V313H429.5V328.9H348Z" fill="#2a2ab4"/>
<path d="M348 297H421V326H348Z" fill="none" stroke="#b01e3c" stroke-width="1.2"/>
<path d="M429.5 329.5V313A12.5 12.5 0 0 1 442 300.5H458V329.5Z" fill="#000"/>
<circle cx="442.8" cy="316.3" r="10.6" fill="#000" stroke="#dcdcdc" stroke-width="1"/>
<clipPath id="h44283163341"><circle cx="442.8" cy="316.3" r="10.1"/></clipPath>
<path d="M414.40000000000003 316.7L442.40000000000003 344.7M414.40000000000003 315.90000000000003L442.40000000000003 287.90000000000003M416.8 314.3L444.8 342.3M416.8 318.3L444.8 290.3M419.2 311.90000000000003L447.2 339.90000000000003M419.2 320.7L447.2 292.7M421.6 309.5L449.6 337.5M421.6 323.1L449.6 295.1M424.0 307.1L452.0 335.1M424.0 325.5L452.0 297.5M426.40000000000003 304.7L454.40000000000003 332.7M426.40000000000003 327.90000000000003L454.40000000000003 299.90000000000003M428.8 302.3L456.8 330.3M428.8 330.3L456.8 302.3M431.2 299.90000000000003L459.2 327.90000000000003M431.2 332.7L459.2 304.7M433.6 297.5L461.6 325.5M433.6 335.1L461.6 307.1M436.0 295.1L464.0 323.1M436.0 337.5L464.0 309.5M438.40000000000003 292.7L466.40000000000003 320.7M438.40000000000003 339.90000000000003L466.40000000000003 311.90000000000003M440.8 290.3L468.8 318.3M440.8 342.3L468.8 314.3M443.2 287.90000000000003L471.2 315.90000000000003M443.2 344.7L471.2 316.7" stroke="#a0a0a0" stroke-width="0.5" clip-path="url(#h44283163341)"/>
<circle cx="442.8" cy="316.3" r="4" fill="none" stroke="#909090" stroke-width="0.6"/>
<circle cx="442.8" cy="316.3" r="7.3" fill="none" stroke="#8a8a8a" stroke-width="0.5"/>
<circle cx="186.3" cy="130" r="6.6" fill="#000"/>
<circle cx="209.5" cy="130" r="6.6" fill="#000"/>
<circle cx="238.8" cy="130" r="6.6" fill="#000"/>
<circle cx="275" cy="137.5" r="6.6" fill="#000"/>
<circle cx="305" cy="137.5" r="6.6" fill="#000"/>
<circle cx="318.8" cy="137" r="6.6" fill="#000"/>
<circle cx="347.5" cy="137" r="6.6" fill="#000"/>
<circle cx="361.3" cy="137" r="6.6" fill="#000"/>
<circle cx="390" cy="137" r="6.6" fill="#000"/>
<circle cx="186.3" cy="145" r="6.6" fill="#000"/>
<circle cx="212.5" cy="145.5" r="6.6" fill="#000"/>
<circle cx="227" cy="145.5" r="6.6" fill="#000"/>
<circle cx="238.8" cy="158.8" r="6.6" fill="#000"/>
<circle cx="267.5" cy="158.8" r="6.6" fill="#000"/>
<circle cx="168.8" cy="168.8" r="6.6" fill="#000"/>
<circle cx="197" cy="168.8" r="6.6" fill="#000"/>
<circle cx="212.5" cy="175.8" r="6.6" fill="#000"/>
<circle cx="227" cy="175.8" r="6.6" fill="#000"/>
<circle cx="245.5" cy="175.8" r="6.6" fill="#000"/>
<circle cx="267" cy="173.8" r="6.6" fill="#000"/>
<circle cx="441.3" cy="177.5" r="6.6" fill="#000"/>
<circle cx="245.5" cy="190" r="6.6" fill="#000"/>
<circle cx="245.5" cy="203.8" r="6.6" fill="#000"/>
<circle cx="267" cy="202" r="6.6" fill="#000"/>
<circle cx="351.3" cy="187.5" r="6.6" fill="#000"/>
<circle cx="381.3" cy="187.5" r="6.6" fill="#000"/>
<circle cx="157" cy="212" r="6.6" fill="#000"/>
<circle cx="157" cy="241.3" r="6.6" fill="#000"/>
<circle cx="242.5" cy="219.5" r="6.6" fill="#000"/>
<circle cx="257" cy="219.5" r="6.6" fill="#000"/>
<circle cx="276" cy="215.8" r="6.6" fill="#000"/>
<circle cx="289.8" cy="219.5" r="6.6" fill="#000"/>
<circle cx="289.8" cy="234.8" r="6.6" fill="#000"/>
<circle cx="242.5" cy="249.3" r="6.6" fill="#000"/>
<circle cx="257" cy="249.3" r="6.6" fill="#000"/>
<circle cx="276" cy="245.5" r="6.6" fill="#000"/>
<circle cx="301.2" cy="250.8" r="6.6" fill="#000"/>
<circle cx="205" cy="263.8" r="6.6" fill="#000"/>
<circle cx="234.5" cy="263.8" r="6.6" fill="#000"/>
<circle cx="279.5" cy="263.8" r="6.6" fill="#000"/>
<circle cx="309" cy="263.8" r="6.6" fill="#000"/>
<circle cx="190" cy="278.8" r="6.6" fill="#000"/>
<circle cx="220.5" cy="278.8" r="6.6" fill="#000"/>
<circle cx="350" cy="210" r="6.6" fill="#000"/>
<circle cx="381.3" cy="210" r="6.6" fill="#000"/>
<circle cx="395" cy="206.3" r="6.6" fill="#000"/>
<circle cx="408.8" cy="206.3" r="6.6" fill="#000"/>
<circle cx="422.5" cy="206.3" r="6.6" fill="#000"/>
<circle cx="442" cy="206.3" r="6.6" fill="#000"/>
<circle cx="320.2" cy="219.5" r="6.6" fill="#000"/>
<circle cx="375" cy="225" r="6.6" fill="#000"/>
<circle cx="392.5" cy="220" r="6.6" fill="#000"/>
<circle cx="435" cy="220" r="6.6" fill="#000"/>
<circle cx="348.8" cy="231.3" r="6.6" fill="#000"/>
<circle cx="320.2" cy="235" r="6.6" fill="#000"/>
<circle cx="408.8" cy="228.8" r="6.6" fill="#000"/>
<circle cx="422.5" cy="228.8" r="6.6" fill="#000"/>
<circle cx="331.5" cy="250.8" r="6.6" fill="#000"/>
<circle cx="375" cy="255" r="6.6" fill="#000"/>
<circle cx="392.5" cy="251.3" r="6.6" fill="#000"/>
<circle cx="435" cy="250" r="6.6" fill="#000"/>
<circle cx="348.8" cy="260" r="6.6" fill="#000"/>
<circle cx="408.8" cy="258.8" r="6.6" fill="#000"/>
<circle cx="422.5" cy="259.5" r="6.6" fill="#000"/>
<circle cx="318.8" cy="275" r="6.6" fill="#000"/>
<circle cx="348.8" cy="274.5" r="6.6" fill="#000"/>
<circle cx="361.3" cy="274.5" r="6.6" fill="#000"/>
<circle cx="391.3" cy="274.5" r="6.6" fill="#000"/>
<circle cx="410" cy="272.5" r="6.6" fill="#000"/>
<circle cx="410" cy="288" r="6.6" fill="#000"/>
<circle cx="218.8" cy="307.5" r="6.6" fill="#000"/>
<circle cx="234.5" cy="307.5" r="6.6" fill="#000"/>
<circle cx="290" cy="286.3" r="6.6" fill="#000"/>
<circle cx="290" cy="301.3" r="6.6" fill="#000"/>
<circle cx="290" cy="315.5" r="6.6" fill="#000"/>
<circle cx="321.3" cy="301.3" r="6.6" fill="#000"/>
<circle cx="351.3" cy="301.3" r="6.6" fill="#000"/>
<circle cx="323.8" cy="316.3" r="6.6" fill="#000"/>
<circle cx="353.8" cy="316.3" r="6.6" fill="#000"/>
<circle cx="378.8" cy="313" r="6.6" fill="#000"/>
<circle cx="393.8" cy="313" r="6.6" fill="#000"/>
<circle cx="408.8" cy="313" r="6.6" fill="#000"/>
<rect x="245.10000000000002" y="261.8" width="16.4" height="12" rx="6" fill="#000"/>
<rect x="245.10000000000002" y="277.3" width="16.4" height="12" rx="6" fill="#000"/>
<rect x="278.8" y="151.6" width="16.4" height="12" rx="6" fill="#000"/>
<rect x="278.8" y="166" width="16.4" height="12" rx="6" fill="#000"/>
<rect x="278.8" y="181" width="16.4" height="12" rx="6" fill="#000"/>
<rect x="278.8" y="196" width="16.4" height="12" rx="6" fill="#000"/>
<rect x="323.2" y="151.6" width="16.4" height="12" rx="6" fill="#000"/>
<rect x="323.2" y="166" width="16.4" height="12" rx="6" fill="#000"/>
<rect x="323.2" y="181" width="16.4" height="12" rx="6" fill="#000"/>
<rect x="323.2" y="196" width="16.4" height="12" rx="6" fill="#000"/>
<rect x="183" y="291.5" width="14" height="18" rx="7" fill="#000"/>
<rect x="253.5" y="297.3" width="14" height="18" rx="7" fill="#000"/>
<rect x="431.8" y="273.3" width="14" height="18" rx="7" fill="#000"/>
<rect x="401.2" y="167.2" width="16" height="22" rx="8" fill="#000"/>
<rect x="416" y="167.2" width="16" height="22" rx="8" fill="#000"/>
<rect x="146.8" y="256.0" width="21" height="15.6" rx="7" fill="#000"/>
<rect x="146.8" y="270.7" width="21" height="15.6" rx="7" fill="#000"/>
<circle cx="197.9" cy="187.8" r="11" fill="#000"/>
<circle cx="197.8" cy="244.5" r="11" fill="#000"/>
<circle cx="177.5" cy="195.4" r="7.6" fill="#000"/>
<circle cx="218.5" cy="195.4" r="7.6" fill="#000"/>
<circle cx="177.5" cy="216.3" r="7.6" fill="#000"/>
<circle cx="177.5" cy="237.5" r="7.6" fill="#000"/>
<circle cx="218.3" cy="237.3" r="7.6" fill="#000"/>
<rect x="353.5" y="158.5" width="13" height="13" fill="#000"/>
<rect x="382.3" y="158.5" width="13" height="13" fill="#000"/>
<path d="M145.5 118.8V328.9M153.5 118.8V328.9M160.5 118.8V328.9M167.5 118.8V328.9M175.5 118.8V328.9M182.5 118.8V328.9M190.5 118.8V328.9M197.5 118.8V328.9M204.5 118.8V328.9M212.5 118.8V328.9M219.5 118.8V328.9M227.5 118.8V328.9M234.5 118.8V328.9M242.5 118.8V328.9M249.5 118.8V328.9M256.5 118.8V328.9M264.5 118.8V328.9M271.5 118.8V328.9M279.5 118.8V328.9M286.5 118.8V328.9M294.5 118.8V328.9M301.5 118.8V328.9M308.5 118.8V328.9M316.5 118.8V328.9M323.5 118.8V328.9M331.5 118.8V328.9M338.5 118.8V328.9M345.5 118.8V328.9M353.5 118.8V328.9M360.5 118.8V328.9M368.5 118.8V328.9M375.5 118.8V328.9M383.5 118.8V328.9M390.5 118.8V328.9M397.5 118.8V328.9M405.5 118.8V328.9M412.5 118.8V328.9M420.5 118.8V328.9M427.5 118.8V328.9M435.5 118.8V328.9M442.5 118.8V328.9M449.5 118.8V328.9M457.5 118.8V328.9M144.3 119.5H457.4M144.3 127.5H457.4M144.3 134.5H457.4M144.3 141.5H457.4M144.3 149.5H457.4M144.3 156.5H457.4M144.3 164.5H457.4M144.3 171.5H457.4M144.3 179.5H457.4M144.3 186.5H457.4M144.3 193.5H457.4M144.3 201.5H457.4M144.3 208.5H457.4M144.3 216.5H457.4M144.3 223.5H457.4M144.3 231.5H457.4M144.3 238.5H457.4M144.3 245.5H457.4M144.3 253.5H457.4M144.3 260.5H457.4M144.3 268.5H457.4M144.3 275.5H457.4M144.3 282.5H457.4M144.3 290.5H457.4M144.3 297.5H457.4M144.3 305.5H457.4M144.3 312.5H457.4M144.3 320.5H457.4M144.3 327.5H457.4" stroke="#ffffff" stroke-opacity="0.085" stroke-width="1" fill="none"/>
<path d="M240.5 131 L241.5 140 L241.5 152 L239.6 159.4" stroke="#000" stroke-width="4.2" fill="none" stroke-linejoin="round" stroke-linecap="round"/>
<path d="M274.4 137.2 L285.6 157.5" stroke="#000" stroke-width="4.2" fill="none" stroke-linejoin="round" stroke-linecap="round"/>
<path d="M281.8 142.8 L288.8 152.5" stroke="#000" stroke-width="4.2" fill="none" stroke-linejoin="round" stroke-linecap="round"/>
<path d="M299 143 L304.7 137.9" stroke="#000" stroke-width="4.2" fill="none" stroke-linejoin="round" stroke-linecap="round"/>
<path d="M186.7 146 L211.6 146" stroke="#000" stroke-width="4.2" fill="none" stroke-linejoin="round" stroke-linecap="round"/>
<path d="M198.2 167.7 L198.2 188.3" stroke="#000" stroke-width="4.2" fill="none" stroke-linejoin="round" stroke-linecap="round"/>
<path d="M198.2 186 L233 185 L244.4 190.6" stroke="#000" stroke-width="4.2" fill="none" stroke-linejoin="round" stroke-linecap="round"/>
<path d="M206 190 L233 190" stroke="#000" stroke-width="4.2" fill="none" stroke-linejoin="round" stroke-linecap="round"/>
<path d="M226.7 175 L244.4 173.9" stroke="#000" stroke-width="4.2" fill="none" stroke-linejoin="round" stroke-linecap="round"/>
<path d="M266.7 173.9 L285.6 173.9" stroke="#000" stroke-width="4.2" fill="none" stroke-linejoin="round" stroke-linecap="round"/>
<path d="M233 188 L244.4 202.8" stroke="#000" stroke-width="4.2" fill="none" stroke-linejoin="round" stroke-linecap="round"/>
<path d="M299 143 L299 206" stroke="#000" stroke-width="4.2" fill="none" stroke-linejoin="round" stroke-linecap="round"/>
<path d="M307 143 L307 206" stroke="#000" stroke-width="4.2" fill="none" stroke-linejoin="round" stroke-linecap="round"/>
<path d="M338.7 155 L350.5 172 L352.1 187" stroke="#000" stroke-width="4.2" fill="none" stroke-linejoin="round" stroke-linecap="round"/>
<path d="M347 181 L388 181" stroke="#000" stroke-width="4.2" fill="none" stroke-linejoin="round" stroke-linecap="round"/>
<path d="M431 178 L440 178" stroke="#000" stroke-width="4.2" fill="none" stroke-linejoin="round" stroke-linecap="round"/>
<path d="M231 205 L216.7 237.2" stroke="#000" stroke-width="4.2" fill="none" stroke-linejoin="round" stroke-linecap="round"/>
<path d="M228 205 L200 255 L188 276" stroke="#000" stroke-width="4.2" fill="none" stroke-linejoin="round" stroke-linecap="round"/>
<path d="M227.5 205 L227.5 232" stroke="#000" stroke-width="4.2" fill="none" stroke-linejoin="round" stroke-linecap="round"/>
<path d="M233 256 L264 256" stroke="#000" stroke-width="4.2" fill="none" stroke-linejoin="round" stroke-linecap="round"/>
<path d="M191 289.5 L242 289.5" stroke="#000" stroke-width="4.2" fill="none" stroke-linejoin="round" stroke-linecap="round"/>
<path d="M264 210 L264 257" stroke="#000" stroke-width="4.2" fill="none" stroke-linejoin="round" stroke-linecap="round"/>
<path d="M287 209.5 L340 209.5" stroke="#000" stroke-width="4.2" fill="none" stroke-linejoin="round" stroke-linecap="round"/>
<path d="M329 210 L329 295" stroke="#000" stroke-width="4.2" fill="none" stroke-linejoin="round" stroke-linecap="round"/>
<path d="M376 226 L380 216" stroke="#000" stroke-width="4.2" fill="none" stroke-linejoin="round" stroke-linecap="round"/>
<path d="M384 215 L457 215" stroke="#000" stroke-width="4.2" fill="none" stroke-linejoin="round" stroke-linecap="round"/>
<path d="M447.8 272 L447.8 294" stroke="#000" stroke-width="4.2" fill="none" stroke-linejoin="round" stroke-linecap="round"/>
<path d="M186.7 270 L186.7 294.4" stroke="#000" stroke-width="4.2" fill="none" stroke-linejoin="round" stroke-linecap="round"/>
<path d="M191 272 L206.7 254.4 L217.8 250" stroke="#000" stroke-width="4.2" fill="none" stroke-linejoin="round" stroke-linecap="round"/>
<path d="M213 287.8 L300 287.8" stroke="#000" stroke-width="4.2" fill="none" stroke-linejoin="round" stroke-linecap="round"/>
<path d="M264.4 277 L300 277" stroke="#000" stroke-width="4.2" fill="none" stroke-linejoin="round" stroke-linecap="round"/>
<path d="M216.7 283 L216.7 308" stroke="#000" stroke-width="4.2" fill="none" stroke-linejoin="round" stroke-linecap="round"/>
<path d="M420 298.9 L428.9 295.6 L457 295.6" stroke="#000" stroke-width="4.2" fill="none" stroke-linejoin="round" stroke-linecap="round"/>
<path d="M428.9 295.6 L428.9 329" stroke="#000" stroke-width="4.2" fill="none" stroke-linejoin="round" stroke-linecap="round"/>
<path d="M300 325.5 L428.9 325.5" stroke="#000" stroke-width="4.2" fill="none" stroke-linejoin="round" stroke-linecap="round"/>
<path d="M300 287.8 L308.9 298.9 L308.9 325.6" stroke="#000" stroke-width="4.2" fill="none" stroke-linejoin="round" stroke-linecap="round"/>
<path d="M360 281 L360 323" stroke="#000" stroke-width="4.2" fill="none" stroke-linejoin="round" stroke-linecap="round"/>
<path d="M253 268 L270 273 L290 286" stroke="#000" stroke-width="4.2" fill="none" stroke-linejoin="round" stroke-linecap="round"/>
<path d="M422 207 L435 220" stroke="#000" stroke-width="4.2" fill="none" stroke-linejoin="round" stroke-linecap="round"/>
<path d="M442 206 L452 215" stroke="#000" stroke-width="4.2" fill="none" stroke-linejoin="round" stroke-linecap="round"/>
<path d="M340 175 L353.7 183.6" stroke="#000" stroke-width="4.2" fill="none" stroke-linejoin="round" stroke-linecap="round"/>
<path d="M363.8 177 L378.9 203.8" stroke="#000" stroke-width="4.2" fill="none" stroke-linejoin="round" stroke-linecap="round"/>
<path d="M390 195 L400 208" stroke="#000" stroke-width="4.2" fill="none" stroke-linejoin="round" stroke-linecap="round"/>
<path d="M300 190 L323.5 207" stroke="#000" stroke-width="4.2" fill="none" stroke-linejoin="round" stroke-linecap="round"/>
<path d="M230 150 L235 157" stroke="#000" stroke-width="4.2" fill="none" stroke-linejoin="round" stroke-linecap="round"/>
<path d="M233.5 188.6 L243.6 193.6" stroke="#000" stroke-width="4.2" fill="none" stroke-linejoin="round" stroke-linecap="round"/>
<path d="M405.4 186 L405.4 203" stroke="#000" stroke-width="4.2" fill="none" stroke-linejoin="round" stroke-linecap="round"/>
<path d="M413.8 186 L413.8 203" stroke="#000" stroke-width="4.2" fill="none" stroke-linejoin="round" stroke-linecap="round"/>
<path d="M413.8 213 L413.8 229" stroke="#000" stroke-width="4.2" fill="none" stroke-linejoin="round" stroke-linecap="round"/>
<path d="M449.5 205.5 L449.5 296" stroke="#000" stroke-width="4.2" fill="none" stroke-linejoin="round" stroke-linecap="round"/>
<path d="M457 205 L457 296" stroke="#000" stroke-width="4.2" fill="none" stroke-linejoin="round" stroke-linecap="round"/>
<path d="M337.4 240 L337.4 308" stroke="#000" stroke-width="4.2" fill="none" stroke-linejoin="round" stroke-linecap="round"/>
<path d="M276 190 L288 212" stroke="#000" stroke-width="4.2" fill="none" stroke-linejoin="round" stroke-linecap="round"/>
<path d="M237.5 185 L237.5 213" stroke="#000" stroke-width="4.2" fill="none" stroke-linejoin="round" stroke-linecap="round"/>
<path d="M263.6 240 L250 256.8" stroke="#000" stroke-width="4.2" fill="none" stroke-linejoin="round" stroke-linecap="round"/>
<path d="M297 287 L314 298" stroke="#000" stroke-width="4.2" fill="none" stroke-linejoin="round" stroke-linecap="round"/>
<path d="M376.4 194.7 L387.3 205.6" stroke="#000" stroke-width="4.2" fill="none" stroke-linejoin="round" stroke-linecap="round"/>
<path d="M370 227 L388.9 204" stroke="#000" stroke-width="4.2" fill="none" stroke-linejoin="round" stroke-linecap="round"/>
<path d="M353 194.7 L356 202.4" stroke="#000" stroke-width="4.2" fill="none" stroke-linejoin="round" stroke-linecap="round"/>
<path d="M240.5 131 L241.5 140 L241.5 152 L239.6 159.4" stroke="#2a2ab4" stroke-width="2.8" fill="none" stroke-linejoin="round" stroke-linecap="round"/>
<path d="M274.4 137.2 L285.6 157.5" stroke="#2a2ab4" stroke-width="2.8" fill="none" stroke-linejoin="round" stroke-linecap="round"/>
<path d="M281.8 142.8 L288.8 152.5" stroke="#2a2ab4" stroke-width="2.8" fill="none" stroke-linejoin="round" stroke-linecap="round"/>
<path d="M299 143 L304.7 137.9" stroke="#2a2ab4" stroke-width="2.8" fill="none" stroke-linejoin="round" stroke-linecap="round"/>
<path d="M186.7 146 L211.6 146" stroke="#2a2ab4" stroke-width="2.8" fill="none" stroke-linejoin="round" stroke-linecap="round"/>
<path d="M198.2 167.7 L198.2 188.3" stroke="#2a2ab4" stroke-width="2.8" fill="none" stroke-linejoin="round" stroke-linecap="round"/>
<path d="M198.2 186 L233 185 L244.4 190.6" stroke="#2a2ab4" stroke-width="2.8" fill="none" stroke-linejoin="round" stroke-linecap="round"/>
<path d="M206 190 L233 190" stroke="#2a2ab4" stroke-width="2.8" fill="none" stroke-linejoin="round" stroke-linecap="round"/>
<path d="M226.7 175 L244.4 173.9" stroke="#2a2ab4" stroke-width="2.8" fill="none" stroke-linejoin="round" stroke-linecap="round"/>
<path d="M266.7 173.9 L285.6 173.9" stroke="#2a2ab4" stroke-width="2.8" fill="none" stroke-linejoin="round" stroke-linecap="round"/>
<path d="M233 188 L244.4 202.8" stroke="#2a2ab4" stroke-width="2.8" fill="none" stroke-linejoin="round" stroke-linecap="round"/>
<path d="M299 143 L299 206" stroke="#2a2ab4" stroke-width="2.8" fill="none" stroke-linejoin="round" stroke-linecap="round"/>
<path d="M307 143 L307 206" stroke="#2a2ab4" stroke-width="2.8" fill="none" stroke-linejoin="round" stroke-linecap="round"/>
<path d="M338.7 155 L350.5 172 L352.1 187" stroke="#2a2ab4" stroke-width="2.8" fill="none" stroke-linejoin="round" stroke-linecap="round"/>
<path d="M347 181 L388 181" stroke="#2a2ab4" stroke-width="2.8" fill="none" stroke-linejoin="round" stroke-linecap="round"/>
<path d="M431 178 L440 178" stroke="#2a2ab4" stroke-width="2.8" fill="none" stroke-linejoin="round" stroke-linecap="round"/>
<path d="M231 205 L216.7 237.2" stroke="#2a2ab4" stroke-width="2.8" fill="none" stroke-linejoin="round" stroke-linecap="round"/>
<path d="M228 205 L200 255 L188 276" stroke="#2a2ab4" stroke-width="2.8" fill="none" stroke-linejoin="round" stroke-linecap="round"/>
<path d="M227.5 205 L227.5 232" stroke="#2a2ab4" stroke-width="2.8" fill="none" stroke-linejoin="round" stroke-linecap="round"/>
<path d="M233 256 L264 256" stroke="#2a2ab4" stroke-width="2.8" fill="none" stroke-linejoin="round" stroke-linecap="round"/>
<path d="M191 289.5 L242 289.5" stroke="#2a2ab4" stroke-width="2.8" fill="none" stroke-linejoin="round" stroke-linecap="round"/>
<path d="M264 210 L264 257" stroke="#2a2ab4" stroke-width="2.8" fill="none" stroke-linejoin="round" stroke-linecap="round"/>
<path d="M287 209.5 L340 209.5" stroke="#2a2ab4" stroke-width="2.8" fill="none" stroke-linejoin="round" stroke-linecap="round"/>
<path d="M329 210 L329 295" stroke="#2a2ab4" stroke-width="2.8" fill="none" stroke-linejoin="round" stroke-linecap="round"/>
<path d="M376 226 L380 216" stroke="#2a2ab4" stroke-width="2.8" fill="none" stroke-linejoin="round" stroke-linecap="round"/>
<path d="M384 215 L457 215" stroke="#2a2ab4" stroke-width="2.8" fill="none" stroke-linejoin="round" stroke-linecap="round"/>
<path d="M447.8 272 L447.8 294" stroke="#2a2ab4" stroke-width="2.8" fill="none" stroke-linejoin="round" stroke-linecap="round"/>
<path d="M186.7 270 L186.7 294.4" stroke="#2a2ab4" stroke-width="2.8" fill="none" stroke-linejoin="round" stroke-linecap="round"/>
<path d="M191 272 L206.7 254.4 L217.8 250" stroke="#2a2ab4" stroke-width="2.8" fill="none" stroke-linejoin="round" stroke-linecap="round"/>
<path d="M213 287.8 L300 287.8" stroke="#2a2ab4" stroke-width="2.8" fill="none" stroke-linejoin="round" stroke-linecap="round"/>
<path d="M264.4 277 L300 277" stroke="#2a2ab4" stroke-width="2.8" fill="none" stroke-linejoin="round" stroke-linecap="round"/>
<path d="M216.7 283 L216.7 308" stroke="#2a2ab4" stroke-width="2.8" fill="none" stroke-linejoin="round" stroke-linecap="round"/>
<path d="M420 298.9 L428.9 295.6 L457 295.6" stroke="#2a2ab4" stroke-width="2.8" fill="none" stroke-linejoin="round" stroke-linecap="round"/>
<path d="M428.9 295.6 L428.9 329" stroke="#2a2ab4" stroke-width="2.8" fill="none" stroke-linejoin="round" stroke-linecap="round"/>
<path d="M300 325.5 L428.9 325.5" stroke="#2a2ab4" stroke-width="2.8" fill="none" stroke-linejoin="round" stroke-linecap="round"/>
<path d="M300 287.8 L308.9 298.9 L308.9 325.6" stroke="#2a2ab4" stroke-width="2.8" fill="none" stroke-linejoin="round" stroke-linecap="round"/>
<path d="M360 281 L360 323" stroke="#2a2ab4" stroke-width="2.8" fill="none" stroke-linejoin="round" stroke-linecap="round"/>
<path d="M253 268 L270 273 L290 286" stroke="#2a2ab4" stroke-width="2.8" fill="none" stroke-linejoin="round" stroke-linecap="round"/>
<path d="M422 207 L435 220" stroke="#2a2ab4" stroke-width="2.8" fill="none" stroke-linejoin="round" stroke-linecap="round"/>
<path d="M442 206 L452 215" stroke="#2a2ab4" stroke-width="2.8" fill="none" stroke-linejoin="round" stroke-linecap="round"/>
<path d="M340 175 L353.7 183.6" stroke="#2a2ab4" stroke-width="2.8" fill="none" stroke-linejoin="round" stroke-linecap="round"/>
<path d="M363.8 177 L378.9 203.8" stroke="#2a2ab4" stroke-width="2.8" fill="none" stroke-linejoin="round" stroke-linecap="round"/>
<path d="M390 195 L400 208" stroke="#2a2ab4" stroke-width="2.8" fill="none" stroke-linejoin="round" stroke-linecap="round"/>
<path d="M300 190 L323.5 207" stroke="#2a2ab4" stroke-width="2.8" fill="none" stroke-linejoin="round" stroke-linecap="round"/>
<path d="M230 150 L235 157" stroke="#2a2ab4" stroke-width="2.8" fill="none" stroke-linejoin="round" stroke-linecap="round"/>
<path d="M233.5 188.6 L243.6 193.6" stroke="#2a2ab4" stroke-width="2.8" fill="none" stroke-linejoin="round" stroke-linecap="round"/>
<path d="M405.4 186 L405.4 203" stroke="#2a2ab4" stroke-width="2.8" fill="none" stroke-linejoin="round" stroke-linecap="round"/>
<path d="M413.8 186 L413.8 203" stroke="#2a2ab4" stroke-width="2.8" fill="none" stroke-linejoin="round" stroke-linecap="round"/>
<path d="M413.8 213 L413.8 229" stroke="#2a2ab4" stroke-width="2.8" fill="none" stroke-linejoin="round" stroke-linecap="round"/>
<path d="M449.5 205.5 L449.5 296" stroke="#2a2ab4" stroke-width="2.8" fill="none" stroke-linejoin="round" stroke-linecap="round"/>
<path d="M457 205 L457 296" stroke="#2a2ab4" stroke-width="2.8" fill="none" stroke-linejoin="round" stroke-linecap="round"/>
<path d="M337.4 240 L337.4 308" stroke="#2a2ab4" stroke-width="2.8" fill="none" stroke-linejoin="round" stroke-linecap="round"/>
<path d="M276 190 L288 212" stroke="#2a2ab4" stroke-width="2.8" fill="none" stroke-linejoin="round" stroke-linecap="round"/>
<path d="M237.5 185 L237.5 213" stroke="#2a2ab4" stroke-width="2.8" fill="none" stroke-linejoin="round" stroke-linecap="round"/>
<path d="M263.6 240 L250 256.8" stroke="#2a2ab4" stroke-width="2.8" fill="none" stroke-linejoin="round" stroke-linecap="round"/>
<path d="M297 287 L314 298" stroke="#2a2ab4" stroke-width="2.8" fill="none" stroke-linejoin="round" stroke-linecap="round"/>
<path d="M376.4 194.7 L387.3 205.6" stroke="#2a2ab4" stroke-width="2.8" fill="none" stroke-linejoin="round" stroke-linecap="round"/>
<path d="M370 227 L388.9 204" stroke="#2a2ab4" stroke-width="2.8" fill="none" stroke-linejoin="round" stroke-linecap="round"/>
<path d="M353 194.7 L356 202.4" stroke="#2a2ab4" stroke-width="2.8" fill="none" stroke-linejoin="round" stroke-linecap="round"/>
<path d="M304 293.5 L433 293.5" stroke="#200810" stroke-width="3.8" fill="none"/>
<path d="M302 209 L302 257" stroke="#200810" stroke-width="3.8" fill="none"/>
<path d="M312.5 209 L312.5 257" stroke="#200810" stroke-width="3.8" fill="none"/>
<path d="M331.4 202 L331.4 245" stroke="#200810" stroke-width="3.8" fill="none"/>
<path d="M335.5 262 L335.5 295" stroke="#200810" stroke-width="3.8" fill="none"/>
<path d="M361 240 L361 270" stroke="#200810" stroke-width="3.8" fill="none"/>
<path d="M427.8 250 L427.8 294.4" stroke="#200810" stroke-width="3.8" fill="none"/>
<path d="M446.7 240 L446.7 272" stroke="#200810" stroke-width="3.8" fill="none"/>
<path d="M196.5 127 L196.5 161" stroke="#200810" stroke-width="3.8" fill="none"/>
<path d="M176 178 L186 190" stroke="#200810" stroke-width="3.8" fill="none"/>
<path d="M171 174 L184 186" stroke="#200810" stroke-width="3.8" fill="none"/>
<path d="M335.4 156.9 L352 182" stroke="#200810" stroke-width="3.8" fill="none"/>
<path d="M230 210 L232 260" stroke="#200810" stroke-width="3.8" fill="none"/>
<path d="M232 180 L232 205" stroke="#200810" stroke-width="3.8" fill="none"/>
<path d="M348.7 160 L380.5 207" stroke="#200810" stroke-width="3.8" fill="none"/>
<path d="M418.4 190 L418.4 212" stroke="#200810" stroke-width="3.8" fill="none"/>
<path d="M284.6 247.8 L261 268.7" stroke="#200810" stroke-width="3.8" fill="none"/>
<path d="M257.5 171 L257.5 213" stroke="#200810" stroke-width="3.8" fill="none"/>
<path d="M267.5 205 L267.5 227" stroke="#200810" stroke-width="3.8" fill="none"/>
<path d="M303 150 L303 208" stroke="#200810" stroke-width="3.8" fill="none"/>
<path d="M294 187.7 L319 207" stroke="#200810" stroke-width="3.8" fill="none"/>
<path d="M393 143 L393 157" stroke="#200810" stroke-width="3.8" fill="none"/>
<path d="M350 195 L370 222" stroke="#200810" stroke-width="3.8" fill="none"/>
<path d="M304 293.5 L433 293.5" stroke="#b01e3c" stroke-width="2.4" fill="none"/>
<path d="M302 209 L302 257" stroke="#b01e3c" stroke-width="2.4" fill="none"/>
<path d="M312.5 209 L312.5 257" stroke="#b01e3c" stroke-width="2.4" fill="none"/>
<path d="M331.4 202 L331.4 245" stroke="#b01e3c" stroke-width="2.4" fill="none"/>
<path d="M335.5 262 L335.5 295" stroke="#b01e3c" stroke-width="2.4" fill="none"/>
<path d="M361 240 L361 270" stroke="#b01e3c" stroke-width="2.4" fill="none"/>
<path d="M427.8 250 L427.8 294.4" stroke="#b01e3c" stroke-width="2.4" fill="none"/>
<path d="M446.7 240 L446.7 272" stroke="#b01e3c" stroke-width="2.4" fill="none"/>
<path d="M196.5 127 L196.5 161" stroke="#b01e3c" stroke-width="2.4" fill="none"/>
<path d="M176 178 L186 190" stroke="#b01e3c" stroke-width="2.4" fill="none"/>
<path d="M171 174 L184 186" stroke="#b01e3c" stroke-width="2.4" fill="none"/>
<path d="M335.4 156.9 L352 182" stroke="#b01e3c" stroke-width="2.4" fill="none"/>
<path d="M230 210 L232 260" stroke="#b01e3c" stroke-width="2.4" fill="none"/>
<path d="M232 180 L232 205" stroke="#b01e3c" stroke-width="2.4" fill="none"/>
<path d="M348.7 160 L380.5 207" stroke="#b01e3c" stroke-width="2.4" fill="none"/>
<path d="M418.4 190 L418.4 212" stroke="#b01e3c" stroke-width="2.4" fill="none"/>
<path d="M284.6 247.8 L261 268.7" stroke="#b01e3c" stroke-width="2.4" fill="none"/>
<path d="M257.5 171 L257.5 213" stroke="#b01e3c" stroke-width="2.4" fill="none"/>
<path d="M267.5 205 L267.5 227" stroke="#b01e3c" stroke-width="2.4" fill="none"/>
<path d="M303 150 L303 208" stroke="#b01e3c" stroke-width="2.4" fill="none"/>
<path d="M294 187.7 L319 207" stroke="#b01e3c" stroke-width="2.4" fill="none"/>
<path d="M393 143 L393 157" stroke="#b01e3c" stroke-width="2.4" fill="none"/>
<path d="M350 195 L370 222" stroke="#b01e3c" stroke-width="2.4" fill="none"/>
<circle cx="186.3" cy="130" r="4.2" fill="#30b048"/>
<circle cx="209.5" cy="130" r="4.2" fill="#30b048"/>
<circle cx="238.8" cy="130" r="4.2" fill="#30b048"/>
<circle cx="275" cy="137.5" r="4.2" fill="#30b048"/>
<circle cx="305" cy="137.5" r="4.2" fill="#30b048"/>
<circle cx="318.8" cy="137" r="4.2" fill="#30b048"/>
<circle cx="347.5" cy="137" r="4.2" fill="#30b048"/>
<circle cx="361.3" cy="137" r="4.2" fill="#30b048"/>
<circle cx="390" cy="137" r="4.2" fill="#30b048"/>
<circle cx="186.3" cy="145" r="4.2" fill="#30b048"/>
<circle cx="212.5" cy="145.5" r="4.2" fill="#30b048"/>
<circle cx="227" cy="145.5" r="4.2" fill="#30b048"/>
<circle cx="238.8" cy="158.8" r="4.2" fill="#30b048"/>
<circle cx="267.5" cy="158.8" r="4.2" fill="#30b048"/>
<circle cx="168.8" cy="168.8" r="4.2" fill="#30b048"/>
<circle cx="197" cy="168.8" r="4.2" fill="#30b048"/>
<circle cx="212.5" cy="175.8" r="4.2" fill="#30b048"/>
<circle cx="227" cy="175.8" r="4.2" fill="#30b048"/>
<circle cx="245.5" cy="175.8" r="4.2" fill="#30b048"/>
<circle cx="267" cy="173.8" r="4.2" fill="#30b048"/>
<circle cx="441.3" cy="177.5" r="4.2" fill="#30b048"/>
<circle cx="245.5" cy="190" r="4.2" fill="#30b048"/>
<circle cx="245.5" cy="203.8" r="4.2" fill="#30b048"/>
<circle cx="267" cy="202" r="4.2" fill="#30b048"/>
<circle cx="351.3" cy="187.5" r="4.2" fill="#30b048"/>
<circle cx="381.3" cy="187.5" r="4.2" fill="#30b048"/>
<circle cx="157" cy="212" r="4.2" fill="#30b048"/>
<circle cx="157" cy="241.3" r="4.2" fill="#30b048"/>
<circle cx="242.5" cy="219.5" r="4.2" fill="#30b048"/>
<circle cx="257" cy="219.5" r="4.2" fill="#30b048"/>
<circle cx="276" cy="215.8" r="4.2" fill="#30b048"/>
<circle cx="289.8" cy="219.5" r="4.2" fill="#30b048"/>
<circle cx="289.8" cy="234.8" r="4.2" fill="#30b048"/>
<circle cx="242.5" cy="249.3" r="4.2" fill="#30b048"/>
<circle cx="257" cy="249.3" r="4.2" fill="#30b048"/>
<circle cx="276" cy="245.5" r="4.2" fill="#30b048"/>
<circle cx="301.2" cy="250.8" r="4.2" fill="#30b048"/>
<circle cx="205" cy="263.8" r="4.2" fill="#30b048"/>
<circle cx="234.5" cy="263.8" r="4.2" fill="#30b048"/>
<circle cx="279.5" cy="263.8" r="4.2" fill="#30b048"/>
<circle cx="309" cy="263.8" r="4.2" fill="#30b048"/>
<circle cx="190" cy="278.8" r="4.2" fill="#30b048"/>
<circle cx="220.5" cy="278.8" r="4.2" fill="#30b048"/>
<circle cx="350" cy="210" r="4.2" fill="#30b048"/>
<circle cx="381.3" cy="210" r="4.2" fill="#30b048"/>
<circle cx="395" cy="206.3" r="4.2" fill="#30b048"/>
<circle cx="408.8" cy="206.3" r="4.2" fill="#30b048"/>
<circle cx="422.5" cy="206.3" r="4.2" fill="#30b048"/>
<circle cx="442" cy="206.3" r="4.2" fill="#30b048"/>
<circle cx="320.2" cy="219.5" r="4.2" fill="#30b048"/>
<circle cx="375" cy="225" r="4.2" fill="#30b048"/>
<circle cx="392.5" cy="220" r="4.2" fill="#30b048"/>
<circle cx="435" cy="220" r="4.2" fill="#30b048"/>
<circle cx="348.8" cy="231.3" r="4.2" fill="#30b048"/>
<circle cx="320.2" cy="235" r="4.2" fill="#30b048"/>
<circle cx="408.8" cy="228.8" r="4.2" fill="#30b048"/>
<circle cx="422.5" cy="228.8" r="4.2" fill="#30b048"/>
<circle cx="331.5" cy="250.8" r="4.2" fill="#30b048"/>
<circle cx="375" cy="255" r="4.2" fill="#30b048"/>
<circle cx="392.5" cy="251.3" r="4.2" fill="#30b048"/>
<circle cx="435" cy="250" r="4.2" fill="#30b048"/>
<circle cx="348.8" cy="260" r="4.2" fill="#30b048"/>
<circle cx="408.8" cy="258.8" r="4.2" fill="#30b048"/>
<circle cx="422.5" cy="259.5" r="4.2" fill="#30b048"/>
<circle cx="318.8" cy="275" r="4.2" fill="#30b048"/>
<circle cx="348.8" cy="274.5" r="4.2" fill="#30b048"/>
<circle cx="361.3" cy="274.5" r="4.2" fill="#30b048"/>
<circle cx="391.3" cy="274.5" r="4.2" fill="#30b048"/>
<circle cx="410" cy="272.5" r="4.2" fill="#30b048"/>
<circle cx="410" cy="288" r="4.2" fill="#30b048"/>
<circle cx="218.8" cy="307.5" r="4.2" fill="#30b048"/>
<circle cx="234.5" cy="307.5" r="4.2" fill="#30b048"/>
<circle cx="290" cy="286.3" r="4.2" fill="#30b048"/>
<circle cx="290" cy="301.3" r="4.2" fill="#30b048"/>
<circle cx="290" cy="315.5" r="4.2" fill="#30b048"/>
<circle cx="321.3" cy="301.3" r="4.2" fill="#30b048"/>
<circle cx="351.3" cy="301.3" r="4.2" fill="#30b048"/>
<circle cx="323.8" cy="316.3" r="4.2" fill="#30b048"/>
<circle cx="353.8" cy="316.3" r="4.2" fill="#30b048"/>
<circle cx="378.8" cy="313" r="4.2" fill="#30b048"/>
<circle cx="393.8" cy="313" r="4.2" fill="#30b048"/>
<circle cx="408.8" cy="313" r="4.2" fill="#30b048"/>
<rect x="246.8" y="263.5" width="13" height="8.6" rx="4.3" fill="#30b048"/>
<rect x="246.8" y="279.0" width="13" height="8.6" rx="4.3" fill="#30b048"/>
<rect x="280.5" y="153.29999999999998" width="13" height="8.6" rx="4.3" fill="#30b048"/>
<rect x="280.5" y="167.7" width="13" height="8.6" rx="4.3" fill="#30b048"/>
<rect x="280.5" y="182.7" width="13" height="8.6" rx="4.3" fill="#30b048"/>
<rect x="280.5" y="197.7" width="13" height="8.6" rx="4.3" fill="#30b048"/>
<rect x="324.9" y="153.29999999999998" width="13" height="8.6" rx="4.3" fill="#30b048"/>
<rect x="324.9" y="167.7" width="13" height="8.6" rx="4.3" fill="#30b048"/>
<rect x="324.9" y="182.7" width="13" height="8.6" rx="4.3" fill="#30b048"/>
<rect x="324.9" y="197.7" width="13" height="8.6" rx="4.3" fill="#30b048"/>
<rect x="185" y="293.5" width="10" height="14" rx="5" fill="#30b048"/>
<rect x="255.5" y="299.3" width="10" height="14" rx="5" fill="#30b048"/>
<rect x="433.8" y="275.3" width="10" height="14" rx="5" fill="#30b048"/>
<rect x="403.0" y="169.7" width="12.4" height="17" rx="6.2" fill="#30b048"/>
<rect x="417.8" y="169.7" width="12.4" height="17" rx="6.2" fill="#30b048"/>
<rect x="148.5" y="257.8" width="17.6" height="12" rx="5.5" fill="#30b048"/>
<rect x="148.5" y="272.5" width="17.6" height="12" rx="5.5" fill="#30b048"/>
<circle cx="197.9" cy="187.8" r="9.7" fill="#2c40c0"/><circle cx="197.9" cy="187.8" r="8.8" fill="#30b048"/><circle cx="197.9" cy="187.8" r="4.2" fill="#3040c8"/><circle cx="197.9" cy="187.8" r="2.4" fill="#c8a0e0"/>
<circle cx="197.8" cy="244.5" r="9.7" fill="#2c40c0"/><circle cx="197.8" cy="244.5" r="8.8" fill="#30b048"/><circle cx="197.8" cy="244.5" r="4.2" fill="#3040c8"/><circle cx="197.8" cy="244.5" r="2.4" fill="#c8a0e0"/>
<rect x="355" y="160" width="10" height="10" fill="#30b048"/>
<rect x="383.8" y="160" width="10" height="10" fill="#30b048"/>
<circle cx="177.5" cy="195.4" r="5.4" fill="#30b048"/>
<circle cx="218.5" cy="195.4" r="5.4" fill="#30b048"/>
<circle cx="177.5" cy="216.3" r="5.4" fill="#30b048"/>
<circle cx="177.5" cy="237.5" r="5.4" fill="#30b048"/>
<circle cx="218.3" cy="237.3" r="5.4" fill="#30b048"/>
<circle cx="260" cy="123" r="5" fill="none" stroke="#d890b0" stroke-width="0.8"/>
<circle cx="260" cy="123" r="2.7" fill="#30b048"/><circle cx="260" cy="123" r="1" fill="#d04060"/>
<circle cx="423.8" cy="123.3" r="5" fill="none" stroke="#d890b0" stroke-width="0.8"/>
<circle cx="423.8" cy="123.3" r="2.7" fill="#30b048"/><circle cx="423.8" cy="123.3" r="1" fill="#d04060"/>
<circle cx="149.1" cy="149" r="5" fill="none" stroke="#d890b0" stroke-width="0.8"/>
<circle cx="149.1" cy="149" r="2.7" fill="#30b048"/><circle cx="149.1" cy="149" r="1" fill="#d04060"/>
<circle cx="452.4" cy="147.7" r="5" fill="none" stroke="#d890b0" stroke-width="0.8"/>
<circle cx="452.4" cy="147.7" r="2.7" fill="#30b048"/><circle cx="452.4" cy="147.7" r="1" fill="#d04060"/>
<circle cx="312.5" cy="171.3" r="5" fill="none" stroke="#d890b0" stroke-width="0.8"/>
<circle cx="312.5" cy="171.3" r="2.7" fill="#30b048"/><circle cx="312.5" cy="171.3" r="1" fill="#d04060"/>
<circle cx="150" cy="200.5" r="5" fill="none" stroke="#d890b0" stroke-width="0.8"/>
<circle cx="150" cy="200.5" r="2.7" fill="#30b048"/><circle cx="150" cy="200.5" r="1" fill="#d04060"/>
<circle cx="452.5" cy="202" r="5" fill="none" stroke="#d890b0" stroke-width="0.8"/>
<circle cx="452.5" cy="202" r="2.7" fill="#30b048"/><circle cx="452.5" cy="202" r="1" fill="#d04060"/>
<circle cx="216.3" cy="212" r="5" fill="none" stroke="#d890b0" stroke-width="0.8"/>
<circle cx="216.3" cy="212" r="2.7" fill="#30b048"/><circle cx="216.3" cy="212" r="1" fill="#d04060"/>
<circle cx="341.3" cy="218.8" r="5" fill="none" stroke="#d890b0" stroke-width="0.8"/>
<circle cx="341.3" cy="218.8" r="2.7" fill="#30b048"/><circle cx="341.3" cy="218.8" r="1" fill="#d04060"/>
<circle cx="270" cy="273" r="5" fill="none" stroke="#d890b0" stroke-width="0.8"/>
<circle cx="270" cy="273" r="2.7" fill="#30b048"/><circle cx="270" cy="273" r="1" fill="#d04060"/>
<circle cx="149.4" cy="297.4" r="5" fill="none" stroke="#d890b0" stroke-width="0.8"/>
<circle cx="149.4" cy="297.4" r="2.7" fill="#30b048"/><circle cx="149.4" cy="297.4" r="1" fill="#d04060"/>
<circle cx="175.4" cy="322.7" r="5" fill="none" stroke="#d890b0" stroke-width="0.8"/>
<circle cx="175.4" cy="322.7" r="2.7" fill="#30b048"/><circle cx="175.4" cy="322.7" r="1" fill="#d04060"/>
<circle cx="272.5" cy="297.5" r="5" fill="none" stroke="#d890b0" stroke-width="0.8"/>
<circle cx="272.5" cy="297.5" r="2.7" fill="#30b048"/><circle cx="272.5" cy="297.5" r="1" fill="#d04060"/>
<circle cx="315" cy="287.5" r="5" fill="none" stroke="#d890b0" stroke-width="0.8"/>
<circle cx="315" cy="287.5" r="2.7" fill="#30b048"/><circle cx="315" cy="287.5" r="1" fill="#d04060"/>
<circle cx="352.5" cy="287.5" r="5" fill="none" stroke="#d890b0" stroke-width="0.8"/>
<circle cx="352.5" cy="287.5" r="2.7" fill="#30b048"/><circle cx="352.5" cy="287.5" r="1" fill="#d04060"/>
<circle cx="388.8" cy="287.5" r="5" fill="none" stroke="#d890b0" stroke-width="0.8"/>
<circle cx="388.8" cy="287.5" r="2.7" fill="#30b048"/><circle cx="388.8" cy="287.5" r="1" fill="#d04060"/>
<circle cx="186.3" cy="130" r="2.5" fill="#4a50c8"/><circle cx="186.3" cy="130" r="1.5" fill="#e0a0d8"/>
<circle cx="209.5" cy="130" r="2.5" fill="#4a50c8"/><circle cx="209.5" cy="130" r="1.5" fill="#e0a0d8"/>
<circle cx="238.8" cy="130" r="2.5" fill="#4a50c8"/><circle cx="238.8" cy="130" r="1.5" fill="#e0a0d8"/>
<circle cx="275" cy="137.5" r="2.5" fill="#4a50c8"/><circle cx="275" cy="137.5" r="1.5" fill="#e0a0d8"/>
<circle cx="305" cy="137.5" r="2.5" fill="#4a50c8"/><circle cx="305" cy="137.5" r="1.5" fill="#e0a0d8"/>
<circle cx="318.8" cy="137" r="2.5" fill="#4a50c8"/><circle cx="318.8" cy="137" r="1.5" fill="#e0a0d8"/>
<circle cx="347.5" cy="137" r="2.5" fill="#4a50c8"/><circle cx="347.5" cy="137" r="1.5" fill="#e0a0d8"/>
<circle cx="361.3" cy="137" r="2.5" fill="#4a50c8"/><circle cx="361.3" cy="137" r="1.5" fill="#e0a0d8"/>
<circle cx="390" cy="137" r="2.5" fill="#4a50c8"/><circle cx="390" cy="137" r="1.5" fill="#e0a0d8"/>
<circle cx="186.3" cy="145" r="2.5" fill="#4a50c8"/><circle cx="186.3" cy="145" r="1.5" fill="#e0a0d8"/>
<circle cx="212.5" cy="145.5" r="2.5" fill="#4a50c8"/><circle cx="212.5" cy="145.5" r="1.5" fill="#e0a0d8"/>
<circle cx="227" cy="145.5" r="2.5" fill="#4a50c8"/><circle cx="227" cy="145.5" r="1.5" fill="#e0a0d8"/>
<circle cx="238.8" cy="158.8" r="2.5" fill="#4a50c8"/><circle cx="238.8" cy="158.8" r="1.5" fill="#e0a0d8"/>
<circle cx="267.5" cy="158.8" r="2.5" fill="#4a50c8"/><circle cx="267.5" cy="158.8" r="1.5" fill="#e0a0d8"/>
<circle cx="168.8" cy="168.8" r="2.5" fill="#4a50c8"/><circle cx="168.8" cy="168.8" r="1.5" fill="#e0a0d8"/>
<circle cx="197" cy="168.8" r="2.5" fill="#4a50c8"/><circle cx="197" cy="168.8" r="1.5" fill="#e0a0d8"/>
<circle cx="212.5" cy="175.8" r="2.5" fill="#4a50c8"/><circle cx="212.5" cy="175.8" r="1.5" fill="#e0a0d8"/>
<circle cx="227" cy="175.8" r="2.5" fill="#4a50c8"/><circle cx="227" cy="175.8" r="1.5" fill="#e0a0d8"/>
<circle cx="245.5" cy="175.8" r="2.5" fill="#4a50c8"/><circle cx="245.5" cy="175.8" r="1.5" fill="#e0a0d8"/>
<circle cx="267" cy="173.8" r="2.5" fill="#4a50c8"/><circle cx="267" cy="173.8" r="1.5" fill="#e0a0d8"/>
<circle cx="441.3" cy="177.5" r="2.5" fill="#4a50c8"/><circle cx="441.3" cy="177.5" r="1.5" fill="#e0a0d8"/>
<circle cx="245.5" cy="190" r="2.5" fill="#4a50c8"/><circle cx="245.5" cy="190" r="1.5" fill="#e0a0d8"/>
<circle cx="245.5" cy="203.8" r="2.5" fill="#4a50c8"/><circle cx="245.5" cy="203.8" r="1.5" fill="#e0a0d8"/>
<circle cx="267" cy="202" r="2.5" fill="#4a50c8"/><circle cx="267" cy="202" r="1.5" fill="#e0a0d8"/>
<circle cx="351.3" cy="187.5" r="2.5" fill="#4a50c8"/><circle cx="351.3" cy="187.5" r="1.5" fill="#e0a0d8"/>
<circle cx="381.3" cy="187.5" r="2.5" fill="#4a50c8"/><circle cx="381.3" cy="187.5" r="1.5" fill="#e0a0d8"/>
<circle cx="157" cy="212" r="2.5" fill="#4a50c8"/><circle cx="157" cy="212" r="1.5" fill="#e0a0d8"/>
<circle cx="157" cy="241.3" r="2.5" fill="#4a50c8"/><circle cx="157" cy="241.3" r="1.5" fill="#e0a0d8"/>
<circle cx="242.5" cy="219.5" r="2.5" fill="#4a50c8"/><circle cx="242.5" cy="219.5" r="1.5" fill="#e0a0d8"/>
<circle cx="257" cy="219.5" r="2.5" fill="#4a50c8"/><circle cx="257" cy="219.5" r="1.5" fill="#e0a0d8"/>
<circle cx="276" cy="215.8" r="2.5" fill="#4a50c8"/><circle cx="276" cy="215.8" r="1.5" fill="#e0a0d8"/>
<circle cx="289.8" cy="219.5" r="2.5" fill="#4a50c8"/><circle cx="289.8" cy="219.5" r="1.5" fill="#e0a0d8"/>
<circle cx="289.8" cy="234.8" r="2.5" fill="#4a50c8"/><circle cx="289.8" cy="234.8" r="1.5" fill="#e0a0d8"/>
<circle cx="242.5" cy="249.3" r="2.5" fill="#4a50c8"/><circle cx="242.5" cy="249.3" r="1.5" fill="#e0a0d8"/>
<circle cx="257" cy="249.3" r="2.5" fill="#4a50c8"/><circle cx="257" cy="249.3" r="1.5" fill="#e0a0d8"/>
<circle cx="276" cy="245.5" r="2.5" fill="#4a50c8"/><circle cx="276" cy="245.5" r="1.5" fill="#e0a0d8"/>
<circle cx="301.2" cy="250.8" r="2.5" fill="#4a50c8"/><circle cx="301.2" cy="250.8" r="1.5" fill="#e0a0d8"/>
<circle cx="205" cy="263.8" r="2.5" fill="#4a50c8"/><circle cx="205" cy="263.8" r="1.5" fill="#e0a0d8"/>
<circle cx="234.5" cy="263.8" r="2.5" fill="#4a50c8"/><circle cx="234.5" cy="263.8" r="1.5" fill="#e0a0d8"/>
<circle cx="279.5" cy="263.8" r="2.5" fill="#4a50c8"/><circle cx="279.5" cy="263.8" r="1.5" fill="#e0a0d8"/>
<circle cx="309" cy="263.8" r="2.5" fill="#4a50c8"/><circle cx="309" cy="263.8" r="1.5" fill="#e0a0d8"/>
<circle cx="190" cy="278.8" r="2.5" fill="#4a50c8"/><circle cx="190" cy="278.8" r="1.5" fill="#e0a0d8"/>
<circle cx="220.5" cy="278.8" r="2.5" fill="#4a50c8"/><circle cx="220.5" cy="278.8" r="1.5" fill="#e0a0d8"/>
<circle cx="350" cy="210" r="2.5" fill="#4a50c8"/><circle cx="350" cy="210" r="1.5" fill="#e0a0d8"/>
<circle cx="381.3" cy="210" r="2.5" fill="#4a50c8"/><circle cx="381.3" cy="210" r="1.5" fill="#e0a0d8"/>
<circle cx="395" cy="206.3" r="2.5" fill="#4a50c8"/><circle cx="395" cy="206.3" r="1.5" fill="#e0a0d8"/>
<circle cx="408.8" cy="206.3" r="2.5" fill="#4a50c8"/><circle cx="408.8" cy="206.3" r="1.5" fill="#e0a0d8"/>
<circle cx="422.5" cy="206.3" r="2.5" fill="#4a50c8"/><circle cx="422.5" cy="206.3" r="1.5" fill="#e0a0d8"/>
<circle cx="442" cy="206.3" r="2.5" fill="#4a50c8"/><circle cx="442" cy="206.3" r="1.5" fill="#e0a0d8"/>
<circle cx="320.2" cy="219.5" r="2.5" fill="#4a50c8"/><circle cx="320.2" cy="219.5" r="1.5" fill="#e0a0d8"/>
<circle cx="375" cy="225" r="2.5" fill="#4a50c8"/><circle cx="375" cy="225" r="1.5" fill="#e0a0d8"/>
<circle cx="392.5" cy="220" r="2.5" fill="#4a50c8"/><circle cx="392.5" cy="220" r="1.5" fill="#e0a0d8"/>
<circle cx="435" cy="220" r="2.5" fill="#4a50c8"/><circle cx="435" cy="220" r="1.5" fill="#e0a0d8"/>
<circle cx="348.8" cy="231.3" r="2.5" fill="#4a50c8"/><circle cx="348.8" cy="231.3" r="1.5" fill="#e0a0d8"/>
<circle cx="320.2" cy="235" r="2.5" fill="#4a50c8"/><circle cx="320.2" cy="235" r="1.5" fill="#e0a0d8"/>
<circle cx="408.8" cy="228.8" r="2.5" fill="#4a50c8"/><circle cx="408.8" cy="228.8" r="1.5" fill="#e0a0d8"/>
<circle cx="422.5" cy="228.8" r="2.5" fill="#4a50c8"/><circle cx="422.5" cy="228.8" r="1.5" fill="#e0a0d8"/>
<circle cx="331.5" cy="250.8" r="2.5" fill="#4a50c8"/><circle cx="331.5" cy="250.8" r="1.5" fill="#e0a0d8"/>
<circle cx="375" cy="255" r="2.5" fill="#4a50c8"/><circle cx="375" cy="255" r="1.5" fill="#e0a0d8"/>
<circle cx="392.5" cy="251.3" r="2.5" fill="#4a50c8"/><circle cx="392.5" cy="251.3" r="1.5" fill="#e0a0d8"/>
<circle cx="435" cy="250" r="2.5" fill="#4a50c8"/><circle cx="435" cy="250" r="1.5" fill="#e0a0d8"/>
<circle cx="348.8" cy="260" r="2.5" fill="#4a50c8"/><circle cx="348.8" cy="260" r="1.5" fill="#e0a0d8"/>
<circle cx="408.8" cy="258.8" r="2.5" fill="#4a50c8"/><circle cx="408.8" cy="258.8" r="1.5" fill="#e0a0d8"/>
<circle cx="422.5" cy="259.5" r="2.5" fill="#4a50c8"/><circle cx="422.5" cy="259.5" r="1.5" fill="#e0a0d8"/>
<circle cx="318.8" cy="275" r="2.5" fill="#4a50c8"/><circle cx="318.8" cy="275" r="1.5" fill="#e0a0d8"/>
<circle cx="348.8" cy="274.5" r="2.5" fill="#4a50c8"/><circle cx="348.8" cy="274.5" r="1.5" fill="#e0a0d8"/>
<circle cx="361.3" cy="274.5" r="2.5" fill="#4a50c8"/><circle cx="361.3" cy="274.5" r="1.5" fill="#e0a0d8"/>
<circle cx="391.3" cy="274.5" r="2.5" fill="#4a50c8"/><circle cx="391.3" cy="274.5" r="1.5" fill="#e0a0d8"/>
<circle cx="410" cy="272.5" r="2.5" fill="#4a50c8"/><circle cx="410" cy="272.5" r="1.5" fill="#e0a0d8"/>
<circle cx="410" cy="288" r="2.5" fill="#4a50c8"/><circle cx="410" cy="288" r="1.5" fill="#e0a0d8"/>
<circle cx="218.8" cy="307.5" r="2.5" fill="#4a50c8"/><circle cx="218.8" cy="307.5" r="1.5" fill="#e0a0d8"/>
<circle cx="234.5" cy="307.5" r="2.5" fill="#4a50c8"/><circle cx="234.5" cy="307.5" r="1.5" fill="#e0a0d8"/>
<circle cx="290" cy="286.3" r="2.5" fill="#4a50c8"/><circle cx="290" cy="286.3" r="1.5" fill="#e0a0d8"/>
<circle cx="290" cy="301.3" r="2.5" fill="#4a50c8"/><circle cx="290" cy="301.3" r="1.5" fill="#e0a0d8"/>
<circle cx="290" cy="315.5" r="2.5" fill="#4a50c8"/><circle cx="290" cy="315.5" r="1.5" fill="#e0a0d8"/>
<circle cx="321.3" cy="301.3" r="2.5" fill="#4a50c8"/><circle cx="321.3" cy="301.3" r="1.5" fill="#e0a0d8"/>
<circle cx="351.3" cy="301.3" r="2.5" fill="#4a50c8"/><circle cx="351.3" cy="301.3" r="1.5" fill="#e0a0d8"/>
<circle cx="323.8" cy="316.3" r="2.5" fill="#4a50c8"/><circle cx="323.8" cy="316.3" r="1.5" fill="#e0a0d8"/>
<circle cx="353.8" cy="316.3" r="2.5" fill="#4a50c8"/><circle cx="353.8" cy="316.3" r="1.5" fill="#e0a0d8"/>
<circle cx="378.8" cy="313" r="2.5" fill="#4a50c8"/><circle cx="378.8" cy="313" r="1.5" fill="#e0a0d8"/>
<circle cx="393.8" cy="313" r="2.5" fill="#4a50c8"/><circle cx="393.8" cy="313" r="1.5" fill="#e0a0d8"/>
<circle cx="408.8" cy="313" r="2.5" fill="#4a50c8"/><circle cx="408.8" cy="313" r="1.5" fill="#e0a0d8"/>
<circle cx="253.3" cy="267.8" r="2.5" fill="#4a50c8"/><circle cx="253.3" cy="267.8" r="1.5" fill="#e0a0d8"/>
<circle cx="253.3" cy="283.3" r="2.5" fill="#4a50c8"/><circle cx="253.3" cy="283.3" r="1.5" fill="#e0a0d8"/>
<circle cx="287" cy="157.6" r="2.5" fill="#4a50c8"/><circle cx="287" cy="157.6" r="1.5" fill="#e0a0d8"/>
<circle cx="287" cy="172" r="2.5" fill="#4a50c8"/><circle cx="287" cy="172" r="1.5" fill="#e0a0d8"/>
<circle cx="287" cy="187" r="2.5" fill="#4a50c8"/><circle cx="287" cy="187" r="1.5" fill="#e0a0d8"/>
<circle cx="287" cy="202" r="2.5" fill="#4a50c8"/><circle cx="287" cy="202" r="1.5" fill="#e0a0d8"/>
<circle cx="331.4" cy="157.6" r="2.5" fill="#4a50c8"/><circle cx="331.4" cy="157.6" r="1.5" fill="#e0a0d8"/>
<circle cx="331.4" cy="172" r="2.5" fill="#4a50c8"/><circle cx="331.4" cy="172" r="1.5" fill="#e0a0d8"/>
<circle cx="331.4" cy="187" r="2.5" fill="#4a50c8"/><circle cx="331.4" cy="187" r="1.5" fill="#e0a0d8"/>
<circle cx="331.4" cy="202" r="2.5" fill="#4a50c8"/><circle cx="331.4" cy="202" r="1.5" fill="#e0a0d8"/>
<circle cx="190" cy="300.5" r="2.5" fill="#4a50c8"/><circle cx="190" cy="300.5" r="1.5" fill="#e0a0d8"/>
<circle cx="260.5" cy="306.3" r="2.5" fill="#4a50c8"/><circle cx="260.5" cy="306.3" r="1.5" fill="#e0a0d8"/>
<circle cx="438.8" cy="282.3" r="2.5" fill="#4a50c8"/><circle cx="438.8" cy="282.3" r="1.5" fill="#e0a0d8"/>
<circle cx="409.2" cy="178.2" r="2.5" fill="#4a50c8"/><circle cx="409.2" cy="178.2" r="1.5" fill="#e0a0d8"/>
<circle cx="424" cy="178.2" r="2.5" fill="#4a50c8"/><circle cx="424" cy="178.2" r="1.5" fill="#e0a0d8"/>
<circle cx="157.3" cy="263.8" r="2.5" fill="#4a50c8"/><circle cx="157.3" cy="263.8" r="1.5" fill="#e0a0d8"/>
<circle cx="157.3" cy="278.5" r="2.5" fill="#4a50c8"/><circle cx="157.3" cy="278.5" r="1.5" fill="#e0a0d8"/>
<circle cx="360" cy="165" r="2.5" fill="#4a50c8"/><circle cx="360" cy="165" r="1.5" fill="#e0a0d8"/>
<circle cx="388.8" cy="165" r="2.5" fill="#4a50c8"/><circle cx="388.8" cy="165" r="1.5" fill="#e0a0d8"/>
<circle cx="177.5" cy="195.4" r="2.5" fill="#4a50c8"/><circle cx="177.5" cy="195.4" r="1.5" fill="#e0a0d8"/>
<circle cx="218.5" cy="195.4" r="2.5" fill="#4a50c8"/><circle cx="218.5" cy="195.4" r="1.5" fill="#e0a0d8"/>
<circle cx="177.5" cy="216.3" r="2.5" fill="#4a50c8"/><circle cx="177.5" cy="216.3" r="1.5" fill="#e0a0d8"/>
<circle cx="177.5" cy="237.5" r="2.5" fill="#4a50c8"/><circle cx="177.5" cy="237.5" r="1.5" fill="#e0a0d8"/>
<circle cx="218.3" cy="237.3" r="2.5" fill="#4a50c8"/><circle cx="218.3" cy="237.3" r="1.5" fill="#e0a0d8"/>
<rect x="285.4" y="259.3" width="18.400000000000034" height="10.099999999999966" rx="0" fill="none" stroke="#e8c4d8" stroke-width="0.8"/>
<rect x="392" y="196" width="35.80000000000001" height="19" rx="6" fill="none" stroke="#e8c4d8" stroke-width="0.8"/>
<rect x="181" y="125" width="11" height="26.69999999999999" rx="0" fill="none" stroke="#e8c4d8" stroke-width="0.8"/>
<rect x="214.4" y="127.2" width="17.799999999999983" height="8.899999999999991" rx="0" fill="none" stroke="#e8c4d8" stroke-width="0.8"/>
<rect x="278.9" y="132.8" width="21.100000000000023" height="10.0" rx="0" fill="none" stroke="#e8c4d8" stroke-width="0.8"/>
<rect x="206.7" y="150.6" width="10.0" height="21.099999999999994" rx="0" fill="none" stroke="#e8c4d8" stroke-width="0.8"/>
<rect x="222.2" y="150.6" width="10.0" height="21.099999999999994" rx="0" fill="none" stroke="#e8c4d8" stroke-width="0.8"/>
<rect x="173.3" y="160.6" width="21.099999999999994" height="14.400000000000006" rx="3" fill="none" stroke="#e8c4d8" stroke-width="0.8"/>
<rect x="243.3" y="152.8" width="21.099999999999966" height="14.399999999999977" rx="3" fill="none" stroke="#e8c4d8" stroke-width="0.8"/>
<rect x="292.6" y="150.2" width="33.5" height="58.80000000000001" rx="0" fill="none" stroke="#e8c4d8" stroke-width="0.8"/>
<rect x="261.8" y="179.4" width="11.5" height="17.799999999999983" rx="0" fill="none" stroke="#e8c4d8" stroke-width="0.8"/>
<rect x="168.9" y="186.5" width="57.79999999999998" height="58.5" rx="0" fill="none" stroke="#e8c4d8" stroke-width="0.8"/>
<rect x="321.1" y="130.9" width="23.5" height="13.400000000000006" rx="3" fill="none" stroke="#e8c4d8" stroke-width="0.8"/>
<rect x="353" y="155.2" width="44.39999999999998" height="21.80000000000001" rx="0" fill="none" stroke="#e8c4d8" stroke-width="0.8"/>
<rect x="236" y="224" width="12" height="21" rx="0" fill="none" stroke="#e8c4d8" stroke-width="0.8"/>
<rect x="251" y="224" width="11" height="21" rx="0" fill="none" stroke="#e8c4d8" stroke-width="0.8"/>
<rect x="270" y="221" width="11" height="20" rx="0" fill="none" stroke="#e8c4d8" stroke-width="0.8"/>
<rect x="295" y="214" width="20" height="11" rx="0" fill="none" stroke="#e8c4d8" stroke-width="0.8"/>
<rect x="295" y="229" width="20" height="12" rx="0" fill="none" stroke="#e8c4d8" stroke-width="0.8"/>
<rect x="306" y="245" width="20" height="12" rx="0" fill="none" stroke="#e8c4d8" stroke-width="0.8"/>
<rect x="353" y="205" width="23.69999999999999" height="10" rx="3" fill="none" stroke="#e8c4d8" stroke-width="0.8"/>
<rect x="341.8" y="233.9" width="13.800000000000011" height="22.200000000000017" rx="3" fill="none" stroke="#e8c4d8" stroke-width="0.8"/>
<rect x="370.7" y="229.4" width="11.5" height="20.0" rx="0" fill="none" stroke="#e8c4d8" stroke-width="0.8"/>
<rect x="384.4" y="225" width="14.5" height="22.19999999999999" rx="3" fill="none" stroke="#e8c4d8" stroke-width="0.8"/>
<rect x="403.3" y="231.7" width="11.099999999999966" height="22.200000000000017" rx="0" fill="none" stroke="#e8c4d8" stroke-width="0.8"/>
<rect x="416.7" y="231.7" width="12.199999999999989" height="22.200000000000017" rx="0" fill="none" stroke="#e8c4d8" stroke-width="0.8"/>
<rect x="427.8" y="225" width="14.399999999999977" height="22.19999999999999" rx="3" fill="none" stroke="#e8c4d8" stroke-width="0.8"/>
<rect x="306.7" y="246" width="20.0" height="9" rx="0" fill="none" stroke="#e8c4d8" stroke-width="0.8"/>
<rect x="324.4" y="269" width="18.900000000000034" height="10" rx="0" fill="none" stroke="#e8c4d8" stroke-width="0.8"/>
<rect x="365.6" y="268" width="18.799999999999955" height="10" rx="3" fill="none" stroke="#e8c4d8" stroke-width="0.8"/>
<rect x="367.8" y="300" width="52.19999999999999" height="25.600000000000023" rx="0" fill="none" stroke="#e8c4d8" stroke-width="0.8"/>
<rect x="326.7" y="294.4" width="21.100000000000023" height="13.400000000000034" rx="3" fill="none" stroke="#e8c4d8" stroke-width="0.8"/>
<rect x="328.9" y="310" width="18.900000000000034" height="11.100000000000023" rx="0" fill="none" stroke="#e8c4d8" stroke-width="0.8"/>
<rect x="277.8" y="275.6" width="22.19999999999999" height="51.099999999999966" rx="0" fill="none" stroke="#e8c4d8" stroke-width="0.8"/>
<rect x="196.7" y="274.4" width="17.700000000000017" height="10.0" rx="0" fill="none" stroke="#e8c4d8" stroke-width="0.8"/>
<rect x="150" y="256" width="14" height="29" rx="4" fill="none" stroke="#e8c4d8" stroke-width="0.8"/>
<rect x="436" y="195" width="10" height="11" rx="0" fill="none" stroke="#e8c4d8" stroke-width="0.8"/>
<rect x="401.5" y="166" width="30.0" height="24.5" rx="6" fill="none" stroke="#e8c4d8" stroke-width="0.8"/>
<rect x="435" y="186" width="12" height="17" rx="0" fill="none" stroke="#e8c4d8" stroke-width="0.8"/>
<rect x="150" y="206" width="14" height="41" rx="4" fill="none" stroke="#e8c4d8" stroke-width="0.8"/>
<rect x="208" y="258" width="23" height="12" rx="4" fill="none" stroke="#e8c4d8" stroke-width="0.8"/>
<rect x="355.4" y="181" width="31.80000000000001" height="13.5" rx="4" fill="none" stroke="#e8c4d8" stroke-width="0.8"/>
<path d="M197.5 207v15M192 217.5h11M201 204.5v4M199 206.5h4" stroke="#e8c4d8" stroke-width="0.8" fill="none"/>
<path d="M304.5 208.5a5 5 0 0 1 10 0" fill="none" stroke="#e8c4d8" stroke-width="0.8"/>
<path d="M251 170H241A7 17 0 0 0 241 204H251" fill="none" stroke="#e8c4d8" stroke-width="0.8"/>
<text x="358" y="202" font-family="Liberation Mono" font-size="4.5" fill="#e8c4d8" text-anchor="start" font-weight="normal" textLength="9" lengthAdjust="spacingAndGlyphs">C14</text>
<path d="M335.7 297v8M338.3 297v8M332 301h3.7M338.3 301h3.7" stroke="#e8c4d8" stroke-width="0.9" fill="none"/>
<path d="M365.2 184.4v8M367.8 184.4v8M361.5 188.4h3.7M367.8 188.4h3.7" stroke="#e8c4d8" stroke-width="0.9" fill="none"/>
<path d="M182.5 163.8v8M185.10000000000002 163.8v8M178.8 167.8h3.7M185.10000000000002 167.8h3.7" stroke="#e8c4d8" stroke-width="0.9" fill="none"/>
<path d="M252.5 156v8M255.10000000000002 156v8M248.8 160h3.7M255.10000000000002 160h3.7" stroke="#e8c4d8" stroke-width="0.9" fill="none"/>
<path d="M331.5 133.6v8M334.1 133.6v8M327.8 137.6h3.7M334.1 137.6h3.7" stroke="#e8c4d8" stroke-width="0.9" fill="none"/>
<path d="M217.5 260.4v8M220.10000000000002 260.4v8M213.8 264.4h3.7M220.10000000000002 264.4h3.7" stroke="#e8c4d8" stroke-width="0.9" fill="none"/>
<path d="M363.7 206v8M366.3 206v8M360 210h3.7M366.3 210h3.7" stroke="#e8c4d8" stroke-width="0.9" fill="none"/>
<path d="M301.7 231v8M304.3 231v8M298 235h3.7M304.3 235h3.7" stroke="#e8c4d8" stroke-width="0.9" fill="none"/>
<path d="M153 225.2h8M153 227.8h8M157 221.5v3.7M157 227.8v3.7" stroke="#e8c4d8" stroke-width="0.9" fill="none"/>
<path d="M238 233.2h8M238 235.8h8M242 229.5v3.7M242 235.8v3.7" stroke="#e8c4d8" stroke-width="0.9" fill="none"/>
<path d="M344.8 243.7h8M344.8 246.3h8M348.8 240v3.7M348.8 246.3v3.7" stroke="#e8c4d8" stroke-width="0.9" fill="none"/>
<path d="M387.6 234.7h8M387.6 237.3h8M391.6 231v3.7M391.6 237.3v3.7" stroke="#e8c4d8" stroke-width="0.9" fill="none"/>
<path d="M431 234.7h8M431 237.3h8M435 231v3.7M435 237.3v3.7" stroke="#e8c4d8" stroke-width="0.9" fill="none"/>
<path d="M408 240.7h8M408 243.3h8M412 237v3.7M412 243.3v3.7" stroke="#e8c4d8" stroke-width="0.9" fill="none"/>
<circle cx="376.3" cy="135.8" r="13.2" fill="none" stroke="#e8c4d8" stroke-width="0.8"/>
<circle cx="376.3" cy="140" r="4.6" fill="none" stroke="#e8c4d8" stroke-width="0.8"/>
<circle cx="253.3" cy="275.6" r="12.2" fill="none" stroke="#e8c4d8" stroke-width="0.8"/>
<circle cx="412.2" cy="280" r="14.4" fill="none" stroke="#e8c4d8" stroke-width="0.8"/>
<circle cx="227" cy="307.3" r="19.8" fill="none" stroke="#e8c4d8" stroke-width="0.8"/>
<circle cx="178.9" cy="138.3" r="3.2" fill="none" stroke="#d890b0" stroke-width="0.7"/>
<text x="270.5" y="128.3" font-family="Liberation Mono" font-size="7.8" fill="#f0d8e8" text-anchor="start" font-weight="normal" textLength="97" lengthAdjust="spacingAndGlyphs">455-Marker ‘CA3028’</text>
<text x="403.8" y="157.6" font-family="Liberation Mono" font-size="8.6" fill="#f0d8e8" text-anchor="start" font-weight="bold" textLength="40" lengthAdjust="spacingAndGlyphs">RK-143’</text>
<text x="456.5" y="291.5" font-family="Liberation Mono" font-size="7.4" fill="#f0d0e0" text-anchor="start" font-weight="bold" textLength="85" lengthAdjust="spacingAndGlyphs" transform="rotate(-90 456.5 291.5)">RADIO KITS IN JA</text>
<text x="354" y="154.6" font-family="Liberation Mono" font-size="6" fill="#e8c4d8" text-anchor="start" font-weight="normal" textLength="34" lengthAdjust="spacingAndGlyphs">RESONATOR</text>
<text x="340" y="150" font-family="Liberation Mono" font-size="4.5" fill="#e8c4d8" text-anchor="start" font-weight="normal" textLength="9" lengthAdjust="spacingAndGlyphs">C12</text>
<text x="251" y="151" font-family="Liberation Mono" font-size="4.5" fill="#e8c4d8" text-anchor="start" font-weight="normal" textLength="9" lengthAdjust="spacingAndGlyphs">C21</text>
<text x="178" y="159" font-family="Liberation Mono" font-size="4.5" fill="#e8c4d8" text-anchor="start" font-weight="normal" textLength="9" lengthAdjust="spacingAndGlyphs">C24</text>
<text x="283" y="140.5" font-family="Liberation Mono" font-size="4.5" fill="#e8c4d8" text-anchor="start" font-weight="normal" textLength="12" lengthAdjust="spacingAndGlyphs">R27</text>
<text x="320" y="207" font-family="Liberation Mono" font-size="5" fill="#e8c4d8" text-anchor="start" font-weight="normal" textLength="22" lengthAdjust="spacingAndGlyphs" transform="rotate(-90 320 207)">CA3028</text>
<text x="359" y="222" font-family="Liberation Mono" font-size="4.5" fill="#e8c4d8" text-anchor="start" font-weight="normal" textLength="9" lengthAdjust="spacingAndGlyphs">C15</text>
<text x="378" y="285" font-family="Liberation Mono" font-size="4.5" fill="#e8c4d8" text-anchor="start" font-weight="normal" textLength="9" lengthAdjust="spacingAndGlyphs">C17</text>
<text x="310" y="253.5" font-family="Liberation Mono" font-size="4.5" fill="#e8c4d8" text-anchor="start" font-weight="normal" textLength="12" lengthAdjust="spacingAndGlyphs">R18</text>
<text x="332" y="319" font-family="Liberation Mono" font-size="4.5" fill="#e8c4d8" text-anchor="start" font-weight="normal" textLength="12" lengthAdjust="spacingAndGlyphs">R96</text>
<text x="199" y="282.5" font-family="Liberation Mono" font-size="4.5" fill="#e8c4d8" text-anchor="start" font-weight="normal" textLength="12" lengthAdjust="spacingAndGlyphs">R91</text>
<text x="375" y="168.5" font-family="Liberation Mono" font-size="6" fill="#e8c4d8" text-anchor="middle" font-weight="normal">+</text>
<text x="372.5" y="133" font-family="Liberation Mono" font-size="6" fill="#e8c4d8" text-anchor="start" font-weight="normal" textLength="8" lengthAdjust="spacingAndGlyphs">IC</text>
<path d="M373.5 139.3h5.6M373.5 141.3h5.6" stroke="#e8c4d8" stroke-width="0.7"/>
<path d="M138.3 112.6H463.5V334.6H138.3Z" fill="none" stroke="#b4b4b4" stroke-width="1"/>
<path d="M138.3 78.7V112.6M138.3 334.6V340M463.5 78.7V112.6M104.1 112.6H138.3M104.1 334.6H138.3" stroke="#b4b4b4" stroke-width="1" fill="none"/>
<path d="M138.3 90.5H463.5M116 112.6V334.6" stroke="#b4b4b4" stroke-width="1" fill="none"/>
<path d="M138.3 90.5L153.8 88.1V92.9Z M463.5 90.5L448 88.1V92.9Z M116 112.6L113.6 128V128H118.4Z M116 334.6L113.6 319H118.4Z" fill="#b4b4b4"/>
<text x="282" y="86.8" font-family="Liberation Sans" font-size="14.5" fill="#c4c4c4" textLength="34.6" lengthAdjust="spacingAndGlyphs">55.55</text>
<text x="113.3" y="241.9" transform="rotate(-90 113.3 241.9)" font-family="Liberation Sans" font-size="14.5" fill="#c4c4c4" textLength="34.7" lengthAdjust="spacingAndGlyphs">38.09</text>
</g>
<rect x="710.5" y="62" width="9.5" height="304.5" fill="#f2f1ec" />
<rect x="711" y="62" width="9" height="8.8" fill="#d4d0c8" />
<line x1="711" y1="62.5" x2="720" y2="62.5" stroke="#fff" stroke-width="1" />
<line x1="711.5" y1="62" x2="711.5" y2="70.8" stroke="#fff" stroke-width="1" />
<line x1="711" y1="70.3" x2="720" y2="70.3" stroke="#404040" stroke-width="1" />
<line x1="719.5" y1="62" x2="719.5" y2="70.8" stroke="#404040" stroke-width="1" />
<path d="M713 68.3h5l-2.5-3z" fill="#000"/>
<rect x="711" y="70.8" width="9" height="269.5" fill="#d4d0c8" />
<line x1="711" y1="71.3" x2="720" y2="71.3" stroke="#fff" stroke-width="1" />
<line x1="711.5" y1="70.8" x2="711.5" y2="340.3" stroke="#fff" stroke-width="1" />
<line x1="711" y1="339.8" x2="720" y2="339.8" stroke="#404040" stroke-width="1" />
<line x1="719.5" y1="70.8" x2="719.5" y2="340.3" stroke="#404040" stroke-width="1" />
<rect x="711" y="357.5" width="9" height="9" fill="#d4d0c8" />
<line x1="711" y1="358.0" x2="720" y2="358.0" stroke="#fff" stroke-width="1" />
<line x1="711.5" y1="357.5" x2="711.5" y2="366.5" stroke="#fff" stroke-width="1" />
<line x1="711" y1="366.0" x2="720" y2="366.0" stroke="#404040" stroke-width="1" />
<line x1="719.5" y1="357.5" x2="719.5" y2="366.5" stroke="#404040" stroke-width="1" />
<path d="M713 360h5l-2.5 3z" fill="#000"/>
<rect x="28" y="366.3" width="683" height="8.5" fill="#f2f1ec" />
<rect x="28" y="366.5" width="8.5" height="8.2" fill="#d4d0c8" />
<line x1="28" y1="367.0" x2="36.5" y2="367.0" stroke="#fff" stroke-width="1" />
<line x1="28.5" y1="366.5" x2="28.5" y2="374.7" stroke="#fff" stroke-width="1" />
<line x1="28" y1="374.2" x2="36.5" y2="374.2" stroke="#404040" stroke-width="1" />
<line x1="36.0" y1="366.5" x2="36.0" y2="374.7" stroke="#404040" stroke-width="1" />
<path d="M34 368v5l-3-2.5z" fill="#000"/>
<rect x="36.5" y="366.5" width="643" height="8.2" fill="#d4d0c8" />
<line x1="36.5" y1="367.0" x2="679.5" y2="367.0" stroke="#fff" stroke-width="1" />
<line x1="37.0" y1="366.5" x2="37.0" y2="374.7" stroke="#fff" stroke-width="1" />
<line x1="36.5" y1="374.2" x2="679.5" y2="374.2" stroke="#404040" stroke-width="1" />
<line x1="679.0" y1="366.5" x2="679.0" y2="374.7" stroke="#404040" stroke-width="1" />
<rect x="702" y="366.5" width="8.5" height="8.2" fill="#d4d0c8" />
<line x1="702" y1="367.0" x2="710.5" y2="367.0" stroke="#fff" stroke-width="1" />
<line x1="702.5" y1="366.5" x2="702.5" y2="374.7" stroke="#fff" stroke-width="1" />
<line x1="702" y1="374.2" x2="710.5" y2="374.2" stroke="#404040" stroke-width="1" />
<line x1="710.0" y1="366.5" x2="710.0" y2="374.7" stroke="#404040" stroke-width="1" />
<path d="M704.5 368v5l3-2.5z" fill="#000"/>
<rect x="710.5" y="366.3" width="9.5" height="8.5" fill="#d4d0c8" />
<line x1="0" y1="374.8" x2="720" y2="374.8" stroke="#808080" stroke-width="0.8" />
<text x="1.5" y="385.2" font-family="Liberation Sans" font-size="9" fill="#000" font-weight="normal" text-anchor="start" textLength="243" lengthAdjust="spacingAndGlyphs" >'D:¥TOOLS¥EAGLE-7.0.0¥projects¥基板オーダー中¥ca3028 455marker¥455.sch' saved.</text>
<path d="M251.5 379.8l2.2 2.2-2.2 2.2-2.2-2.2z" fill="#000"/>
<text x="256.5" y="385.2" font-family="Liberation Sans" font-size="9" fill="#000" font-weight="normal" text-anchor="start" textLength="98.5" lengthAdjust="spacingAndGlyphs" >Left-click to select object to move</text>
<rect x="602" y="375.2" width="94" height="13" fill="#d4d0c8" />
<line x1="602" y1="375.7" x2="696" y2="375.7" stroke="#fff" stroke-width="1" />
<line x1="602.5" y1="375.2" x2="602.5" y2="388.2" stroke="#fff" stroke-width="1" />
<line x1="602" y1="387.7" x2="696" y2="387.7" stroke="#404040" stroke-width="1" />
<line x1="695.5" y1="375.2" x2="695.5" y2="388.2" stroke="#404040" stroke-width="1" />
<circle cx="604.5" cy="377.5" r="0.8" fill="#c02020"/>
<line x1="604" y1="379" x2="604" y2="386.5" stroke="#909090" stroke-width="0.8" />
<path d="M608 386h2" stroke="#404040" stroke-width="0.8"/>
<text x="610.5" y="386" font-family="Liberation Sans" font-size="9" fill="#202020" font-weight="normal" text-anchor="start" textLength="8" lengthAdjust="spacingAndGlyphs" >A</text>
<text x="621.5" y="386" font-family="Liberation Sans" font-size="8.5" fill="#202020" font-weight="normal" text-anchor="start" textLength="9" lengthAdjust="spacingAndGlyphs" >般</text>
<circle cx="639" cy="382" r="3.6" fill="#e8c020"/><path d="M636 380l6 3" stroke="#c03020" stroke-width="1.5"/><circle cx="640" cy="379" r="1.6" fill="#3060c0"/>
<rect x="646.5" y="377.5" width="8" height="8" fill="#208890" />
<path d="M648 386l7-6" stroke="#c02020" stroke-width="1.3"/>
<rect x="659" y="377.5" width="8" height="7" fill="#e0e0e0" stroke="#404040" stroke-width="0.8"/>
<rect x="660.5" y="379" width="5" height="3" fill="#606060" />
<rect x="665" y="384" width="2.5" height="2.5" fill="#2040c0" />
<circle cx="675.5" cy="381.5" r="4.2" fill="#f0d020"/><path d="M673 380a2.5 2.5 0 1 1 3 2.5v1.5" stroke="#202020" stroke-width="1.2" fill="none"/><path d="M677 384l3 2" stroke="#c02020" stroke-width="1.2"/>
<rect x="682" y="377" width="12" height="10" fill="#e8e8e8" stroke="#a0a0a0" stroke-width="0.6"/>
<text x="683" y="381.3" font-family="Liberation Sans" font-size="3.8" fill="#303030" font-weight="normal" text-anchor="start" textLength="10" lengthAdjust="spacingAndGlyphs" >CAPS</text>
<text x="683" y="386" font-family="Liberation Sans" font-size="3.8" fill="#303030" font-weight="normal" text-anchor="start" textLength="10" lengthAdjust="spacingAndGlyphs" >KANA</text>
<rect x="696.5" y="375.2" width="12" height="13" fill="#d4d0c8" />
<line x1="696.5" y1="375.7" x2="708.5" y2="375.7" stroke="#fff" stroke-width="1" />
<line x1="697.0" y1="375.2" x2="697.0" y2="388.2" stroke="#fff" stroke-width="1" />
<line x1="696.5" y1="387.7" x2="708.5" y2="387.7" stroke="#404040" stroke-width="1" />
<line x1="708.0" y1="375.2" x2="708.0" y2="388.2" stroke="#404040" stroke-width="1" />
<path d="M703 377.5l-3.5 4.5h3l-2 4.5 5-5.5h-3z" fill="#40c030"/>
<rect x="708.5" y="375.2" width="11.5" height="13" fill="#d4d0c8" />
<line x1="708.5" y1="375.7" x2="720.0" y2="375.7" stroke="#fff" stroke-width="1" />
<line x1="709.0" y1="375.2" x2="709.0" y2="388.2" stroke="#fff" stroke-width="1" />
<line x1="708.5" y1="387.7" x2="720.0" y2="387.7" stroke="#404040" stroke-width="1" />
<line x1="719.5" y1="375.2" x2="719.5" y2="388.2" stroke="#404040" stroke-width="1" />
<rect x="0" y="389" width="720" height="16" fill="#d4d0c8" />
<line x1="0" y1="389.5" x2="720" y2="389.5" stroke="#fff" stroke-width="1" />
<rect x="1.5" y="391.5" width="36" height="12" fill="#d4d0c8" />
<line x1="1.5" y1="392.0" x2="37.5" y2="392.0" stroke="#fff" stroke-width="1" />
<line x1="2.0" y1="391.5" x2="2.0" y2="403.5" stroke="#fff" stroke-width="1" />
<line x1="1.5" y1="403.0" x2="37.5" y2="403.0" stroke="#404040" stroke-width="1" />
<line x1="37.0" y1="391.5" x2="37.0" y2="403.5" stroke="#404040" stroke-width="1" />
<rect x="3.5" y="393.5" width="3" height="3.5" fill="#d03020" />
<rect x="6.7" y="393" width="3" height="3.8" fill="#30a030" />
<rect x="3.5" y="397.3" width="3" height="3.8" fill="#2050c0" />
<rect x="6.7" y="397" width="3" height="3.8" fill="#e0c020" />
<path d="M3 394c1-1 2-1 3 0M3 401.5c1-1 2-1 3 0" stroke="#000" stroke-width="0.6" fill="none"/>
<rect x="10" y="393" width="1.3" height="8" fill="#101010" />
<text x="12.5" y="401.2" font-family="Liberation Sans" font-size="8.5" fill="#000" font-weight="bold" text-anchor="start" textLength="23" lengthAdjust="spacingAndGlyphs" >スタート</text>
<line x1="39.5" y1="392" x2="39.5" y2="403" stroke="#fff" stroke-width="1" />
<line x1="40.5" y1="392" x2="40.5" y2="403" stroke="#808080" stroke-width="1" />
<line x1="42" y1="392" x2="42" y2="403" stroke="#fff" stroke-width="1" />
<line x1="43" y1="392" x2="43" y2="403" stroke="#808080" stroke-width="1" />
<path d="M48.5 399a4 4 0 1 1 8 0h-8" fill="none" stroke="#3a88d8" stroke-width="2"/><path d="M47.5 401.5c2-5 6-7 9-8" stroke="#80b8e8" stroke-width="1" fill="none"/>
<rect x="61" y="395.5" width="8" height="6" fill="#f0f0f8" stroke="#3070c0" stroke-width="1.2"/>
<circle cx="63" cy="398" r="2.3" fill="#3a88d8"/>
<rect x="73.5" y="393.5" width="9" height="9" fill="#d8a020" />
<rect x="74.5" y="394.5" width="7" height="7" fill="#2a70a8" />
<path d="M75 398l2 3 4-6" stroke="#f0f060" stroke-width="1.2" fill="none"/>
<rect x="86.5" y="393.5" width="9" height="9" fill="#e8eef8" stroke="#606878" stroke-width="0.9"/>
<circle cx="91" cy="397.8" r="2" fill="none" stroke="#4080c0" stroke-width="0.9"/>
<circle cx="103.3" cy="397.8" r="3.8" fill="none" stroke="#e04020" stroke-width="2"/><path d="M103.3 394a3.8 3.8 0 0 1 3.8 3.8" stroke="#30a040" stroke-width="2" fill="none"/><path d="M99.5 397.8a3.8 3.8 0 0 0 3.8 3.8" stroke="#2060d0" stroke-width="2" fill="none"/><circle cx="103.3" cy="397.8" r="1.2" fill="#101010"/>
<rect x="113" y="394" width="8" height="8" fill="#f0f4ff" stroke="#3060c0" stroke-width="0.9"/>
<rect x="113" y="394" width="8" height="2" fill="#3060c0" />
<path d="M112 402l2-3" stroke="#c03030" stroke-width="1"/>
<rect x="126" y="393.5" width="8" height="6.5" fill="#606870" />
<rect x="127" y="394.5" width="6" height="4.5" fill="#30b0e0" />
<rect x="125.5" y="400.5" width="9" height="2" fill="#a0a0a0" />
<circle cx="142.5" cy="398" r="4.5" fill="#e86a10"/><circle cx="143.0" cy="397.5" r="2.5" fill="#3050a0"/><path d="M138.5 398c1 4 6 5 8 1" stroke="#f0a020" stroke-width="1.4" fill="none"/>
<circle cx="155" cy="398" r="4.3" fill="#e8f0f8" stroke="#2050a0" stroke-width="1"/><path d="M155 398l2.5-3M155 398l-2 2" stroke="#202020" stroke-width="0.9"/>
<rect x="164.0" y="393.5" width="9" height="9" fill="#e8f0e8" stroke="#207040" stroke-width="1.2"/>
<path d="M166.0 395.5l5 5M171.0 395.5l-5 5" stroke="#208040" stroke-width="1.4"/>
<path d="M178 395l4-1.5v9l-4 1z" fill="#2040c0"/>
<rect x="181.5" y="395" width="5" height="7.5" fill="#404850" />
<rect x="190.0" y="395" width="9" height="7" fill="#e8e8e8" stroke="#505050" stroke-width="0.8"/>
<rect x="190.5" y="395.5" width="4" height="2" fill="#30c030" />
<rect x="194.5" y="399" width="3.5" height="2.5" fill="#d03040" />
<rect x="203.0" y="393.5" width="9" height="9" fill="#2a3a98" />
<path d="M204.0 396l1.7 5 1.8-4 1.8 4 1.7-5" stroke="#fff" stroke-width="1.1" fill="none"/>
<line x1="290.5" y1="392" x2="290.5" y2="403" stroke="#fff" stroke-width="1" />
<line x1="291.5" y1="392" x2="291.5" y2="403" stroke="#808080" stroke-width="1" />
<rect x="295" y="391.3" width="41" height="12.5" fill="#d4d0c8" />
<line x1="295" y1="391.8" x2="336" y2="391.8" stroke="#fff" stroke-width="1" />
<line x1="295.5" y1="391.3" x2="295.5" y2="403.8" stroke="#fff" stroke-width="1" />
<line x1="295" y1="403.3" x2="336" y2="403.3" stroke="#404040" stroke-width="1" />
<line x1="335.5" y1="391.3" x2="335.5" y2="403.8" stroke="#404040" stroke-width="1" />
<rect x="298" y="394" width="8" height="6.5" fill="#e8c860" />
<circle cx="303" cy="398" r="2.2" fill="#3070c0"/>
<text x="308" y="401.2" font-family="Liberation Sans" font-size="8.3" fill="#000" font-weight="normal" text-anchor="start" textLength="25" lengthAdjust="spacingAndGlyphs" >ca3028 ...</text>
<rect x="337.5" y="391.3" width="41" height="12.5" fill="#d4d0c8" />
<line x1="337.5" y1="391.8" x2="378.5" y2="391.8" stroke="#fff" stroke-width="1" />
<line x1="338.0" y1="391.3" x2="338.0" y2="403.8" stroke="#fff" stroke-width="1" />
<line x1="337.5" y1="403.3" x2="378.5" y2="403.3" stroke="#404040" stroke-width="1" />
<line x1="378.0" y1="391.3" x2="378.0" y2="403.8" stroke="#404040" stroke-width="1" />
<rect x="340.5" y="393.5" width="8.5" height="8" fill="#e8f0e8" stroke="#207040" stroke-width="1.1"/>
<path d="M342.5 395.5l4.5 4.5M347.0 395.5l-4.5 4.5" stroke="#208040" stroke-width="1.2"/>
<text x="350.5" y="401.2" font-family="Liberation Sans" font-size="8.3" fill="#000" font-weight="normal" text-anchor="start" textLength="25" lengthAdjust="spacingAndGlyphs" >Microso...</text>
<rect x="380" y="391.3" width="41" height="12.5" fill="#d4d0c8" />
<line x1="380" y1="391.8" x2="421" y2="391.8" stroke="#fff" stroke-width="1" />
<line x1="380.5" y1="391.3" x2="380.5" y2="403.8" stroke="#fff" stroke-width="1" />
<line x1="380" y1="403.3" x2="421" y2="403.3" stroke="#404040" stroke-width="1" />
<line x1="420.5" y1="391.3" x2="420.5" y2="403.8" stroke="#404040" stroke-width="1" />
<path d="M390 394.5c-3-1.5-6 0.5-6 3.5s3 5 6 3.5l-1-2c-2 1-3.5 0-3.5-1.5s1.5-2.5 3.5-1.5z" fill="#e01830"/>
<text x="393" y="401.2" font-family="Liberation Sans" font-size="8.3" fill="#000" font-weight="normal" text-anchor="start" textLength="25" lengthAdjust="spacingAndGlyphs" >Control ...</text>
<rect x="422.5" y="391.3" width="41" height="12.5" fill="#d4d0c8" />
<line x1="422.5" y1="391.8" x2="463.5" y2="391.8" stroke="#fff" stroke-width="1" />
<line x1="423.0" y1="391.3" x2="423.0" y2="403.8" stroke="#fff" stroke-width="1" />
<line x1="422.5" y1="403.3" x2="463.5" y2="403.3" stroke="#404040" stroke-width="1" />
<line x1="463.0" y1="391.3" x2="463.0" y2="403.8" stroke="#404040" stroke-width="1" />
<rect x="425.5" y="394.5" width="9" height="6" fill="#58b058" />
<text x="426.1" y="399.4" font-family="Liberation Sans" font-size="3.3" fill="#c8f0c8" font-weight="normal" text-anchor="start" textLength="7.8" lengthAdjust="spacingAndGlyphs" >BRD</text>
<text x="435.5" y="401.2" font-family="Liberation Sans" font-size="8.3" fill="#000" font-weight="normal" text-anchor="start" textLength="25" lengthAdjust="spacingAndGlyphs" >2 Board...</text>
<rect x="465" y="391.3" width="41" height="12.5" fill="#d4d0c8" />
<line x1="465" y1="391.8" x2="506" y2="391.8" stroke="#fff" stroke-width="1" />
<line x1="465.5" y1="391.3" x2="465.5" y2="403.8" stroke="#fff" stroke-width="1" />
<line x1="465" y1="403.3" x2="506" y2="403.3" stroke="#404040" stroke-width="1" />
<line x1="505.5" y1="391.3" x2="505.5" y2="403.8" stroke="#404040" stroke-width="1" />
<rect x="468" y="394.5" width="9" height="6" fill="#e8d8d8" />
<text x="468.6" y="399.4" font-family="Liberation Sans" font-size="3.3" fill="#d02040" font-weight="normal" text-anchor="start" textLength="7.8" lengthAdjust="spacingAndGlyphs" >SCH</text>
<text x="478" y="401.2" font-family="Liberation Sans" font-size="8.3" fill="#000" font-weight="normal" text-anchor="start" textLength="25" lengthAdjust="spacingAndGlyphs" >1 Sche...</text>
<rect x="507.5" y="391.3" width="41" height="12.5" fill="#d4d0c8" />
<line x1="507.5" y1="391.8" x2="548.5" y2="391.8" stroke="#fff" stroke-width="1" />
<line x1="508.0" y1="391.3" x2="508.0" y2="403.8" stroke="#fff" stroke-width="1" />
<line x1="507.5" y1="403.3" x2="548.5" y2="403.3" stroke="#404040" stroke-width="1" />
<line x1="548.0" y1="391.3" x2="548.0" y2="403.8" stroke="#404040" stroke-width="1" />
<path d="M517.5 394.5c-3-1.5-6 0.5-6 3.5s3 5 6 3.5l-1-2c-2 1-3.5 0-3.5-1.5s1.5-2.5 3.5-1.5z" fill="#e01830"/>
<text x="520.5" y="401.2" font-family="Liberation Sans" font-size="8.3" fill="#000" font-weight="normal" text-anchor="start" textLength="25" lengthAdjust="spacingAndGlyphs" >Control ...</text>
<rect x="550" y="391.3" width="41" height="12.5" fill="#ebe9e4" />
<line x1="550" y1="391.8" x2="591" y2="391.8" stroke="#404040" stroke-width="1" />
<line x1="550.5" y1="391.3" x2="550.5" y2="403.8" stroke="#404040" stroke-width="1" />
<line x1="550" y1="403.3" x2="591" y2="403.3" stroke="#fff" stroke-width="1" />
<line x1="590.5" y1="391.3" x2="590.5" y2="403.8" stroke="#fff" stroke-width="1" />
<rect x="553" y="394.5" width="9" height="6" fill="#58b058" />
<text x="553.6" y="399.4" font-family="Liberation Sans" font-size="3.3" fill="#c8f0c8" font-weight="normal" text-anchor="start" textLength="7.8" lengthAdjust="spacingAndGlyphs" >BRD</text>
<text x="563" y="401.2" font-family="Liberation Sans" font-size="8.3" fill="#000" font-weight="bold" text-anchor="start" textLength="25" lengthAdjust="spacingAndGlyphs" >2 Boar...</text>
<rect x="592.5" y="391.3" width="41" height="12.5" fill="#d4d0c8" />
<line x1="592.5" y1="391.8" x2="633.5" y2="391.8" stroke="#fff" stroke-width="1" />
<line x1="593.0" y1="391.3" x2="593.0" y2="403.8" stroke="#fff" stroke-width="1" />
<line x1="592.5" y1="403.3" x2="633.5" y2="403.3" stroke="#404040" stroke-width="1" />
<line x1="633.0" y1="391.3" x2="633.0" y2="403.8" stroke="#404040" stroke-width="1" />
<rect x="595.5" y="394.5" width="9" height="6" fill="#e8d8d8" />
<text x="596.1" y="399.4" font-family="Liberation Sans" font-size="3.3" fill="#d02040" font-weight="normal" text-anchor="start" textLength="7.8" lengthAdjust="spacingAndGlyphs" >SCH</text>
<text x="605.5" y="401.2" font-family="Liberation Sans" font-size="8.3" fill="#000" font-weight="normal" text-anchor="start" textLength="25" lengthAdjust="spacingAndGlyphs" >1 Sche...</text>
<rect x="639.5" y="391.5" width="80.5" height="11.8" fill="#d4d0c8" />
<line x1="639.5" y1="392.0" x2="720.0" y2="392.0" stroke="#808080" stroke-width="1" />
<line x1="640.0" y1="391.5" x2="640.0" y2="403.3" stroke="#808080" stroke-width="1" />
<line x1="639.5" y1="402.8" x2="720.0" y2="402.8" stroke="#fff" stroke-width="1" />
<line x1="719.5" y1="391.5" x2="719.5" y2="403.3" stroke="#fff" stroke-width="1" />
<circle cx="646.8" cy="397.3" r="3.8" fill="none" stroke="#d02020" stroke-width="1.3"/><path d="M644.5 400l4.5-5.5" stroke="#d02020" stroke-width="1.1"/><circle cx="646" cy="397.5" r="1.5" fill="#e0c020"/>
<path d="M653 400l3-4 4 1M654 396l4-2 3 2" stroke="#20a040" stroke-width="1.2" fill="none"/><path d="M655 399l5 0" stroke="#2040a0" stroke-width="1.2"/>
<path d="M663.5 393.5h7.5v5l-3.8 3.5-3.7-3.5z" fill="#303020"/><circle cx="667.2" cy="397" r="1.8" fill="#2050d0"/>
<ellipse cx="677.5" cy="396.8" rx="4.2" ry="2.8" fill="#1040e0"/><path d="M676 399.5l-1 2.5 3-2" fill="#1040e0"/><circle cx="677.5" cy="396.8" r="1" fill="#fff"/>
<rect x="686" y="393.5" width="6.5" height="7.5" fill="#f0f0f8" stroke="#2040a0" stroke-width="0.9"/>
<rect x="684" y="397.5" width="4" height="3.5" fill="#202020" />
<text x="697" y="401.3" font-family="Liberation Sans" font-size="8.5" fill="#000" font-weight="normal" text-anchor="start" textLength="16" lengthAdjust="spacingAndGlyphs" >18:55</text>
</svg></body></html>
